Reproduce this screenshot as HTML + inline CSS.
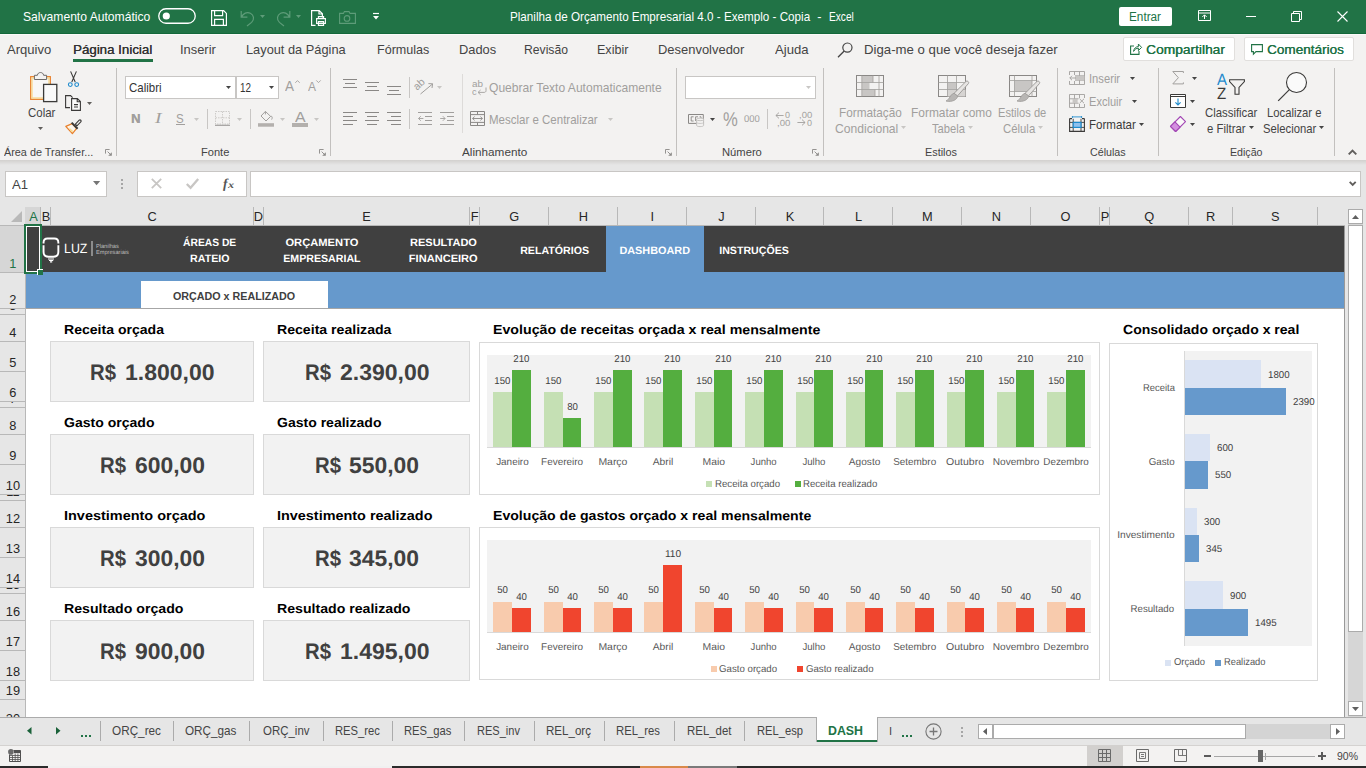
<!DOCTYPE html>
<html><head><meta charset="utf-8"><title>Excel</title>
<style>
html,body{margin:0;padding:0;}
body{width:1366px;height:768px;overflow:hidden;position:relative;background:#fff;font-family:"Liberation Sans",sans-serif;}
body div,body span,body svg{position:absolute;}
span{display:block;}
svg{overflow:visible;}
</style></head><body>
<div style="left:0px;top:0px;width:1366px;height:34px;background:#217346;"></div>
<div style="left:0px;top:33px;width:1366px;height:1px;background:#14683b;"></div>
<div style="left:0px;top:34px;width:1366px;height:126px;background:#f3f2f1;"></div>
<div style="left:0px;top:34px;width:1366px;height:1px;background:#fbfaf9;"></div>
<div style="left:0px;top:160px;width:1366px;height:5px;background:linear-gradient(#d2d0ce,#e6e6e6);"></div>
<div style="left:0px;top:165px;width:1366px;height:42px;background:#e6e6e6;"></div>
<span style="left:23.40px;top:9.00px;font-size:12.7px;line-height:16px;color:#fff;white-space:pre;transform:scale(0.9548,1);transform-origin:left 12px;">Salvamento Automático</span>
<svg style="left:158px;top:8px;" width="38" height="16" viewBox="0 0 38 16"><rect x="0.75" y="0.75" width="36.5" height="14.5" rx="7.25" fill="none" stroke="#fff" stroke-width="1.3"/><circle cx="8.3" cy="8" r="3.6" fill="#fff"/></svg>
<svg style="left:211px;top:10px;" width="16" height="16" viewBox="0 0 16 16"><path d="M0.6 0.6H12.6L15.4 3.4V15.4H0.6Z M3.6 0.6V5.6H11.6V0.6 M3.6 15.4V9.4H12.4V15.4" fill="none" stroke="#fff" stroke-width="1.2"/></svg>
<svg style="left:240px;top:10px;" width="16" height="16" viewBox="0 0 16 16"><path d="M1.2 1V7.2H7.4 M1.6 7C3 3.2 7 1.6 10.4 3.2C14 5 14.6 9.6 11.6 12.4L7 16" fill="none" stroke="#5e9c79" stroke-width="1.2"/></svg>
<svg style="left:260px;top:15px;" width="5" height="3" viewBox="0 0 5 3"><path d="M0 0H5L2.5 3Z" fill="#5e9c79"/></svg>
<svg style="left:275px;top:10px;" width="16" height="16" viewBox="0 0 16 16"><path d="M14.8 1V7.2H8.6 M14.4 7C13 3.2 9 1.6 5.6 3.2C2 5 1.4 9.6 4.4 12.4L9 16" fill="none" stroke="#5e9c79" stroke-width="1.2"/></svg>
<svg style="left:295.5px;top:15px;" width="5" height="3" viewBox="0 0 5 3"><path d="M0 0H5L2.5 3Z" fill="#5e9c79"/></svg>
<svg style="left:311px;top:10px;" width="16" height="16" viewBox="0 0 16 16"><path d="M4.5 15.4H0.6V0.6H8.2L11.4 3.8V7.5 M8 0.8V4H11.2" fill="none" stroke="#fff" stroke-width="1.2"/><path d="M5.6 8.6H14.4V13.4H5.6Z M7.4 8.4V6.6H12.6V8.4 M7.4 11.6H12.6V15.4H7.4Z" fill="none" stroke="#fff" stroke-width="1.1"/></svg>
<svg style="left:339px;top:11px;" width="17" height="13" viewBox="0 0 17 13"><path d="M0.6 2.4H4.4L5.4 0.6H10L11 2.4H16.4V12.4H0.6Z" fill="none" stroke="#5e9c79" stroke-width="1.1"/><circle cx="8" cy="7.4" r="2.8" fill="none" stroke="#5e9c79" stroke-width="1.1"/></svg>
<svg style="left:373px;top:13px;" width="6" height="7" viewBox="0 0 6 7"><path d="M0 0.5H6" stroke="#fff" stroke-width="1.2"/><path d="M0 3H6L3 6.4Z" fill="#fff"/></svg>
<span style="left:510.40px;top:9.00px;font-size:12.7px;line-height:16px;color:#fff;white-space:pre;transform:scale(0.9192,1);transform-origin:left 12px;">Planilha de Orçamento Empresarial 4.0 - Exemplo - Copia</span>
<span style="left:817.30px;top:9.00px;font-size:12.7px;line-height:16px;color:#fff;white-space:pre;">-</span>
<span style="left:828.80px;top:9.00px;font-size:12.7px;line-height:16px;color:#fff;white-space:pre;transform:scale(0.7986,1);transform-origin:left 12px;">Excel</span>
<div style="left:1119px;top:7px;width:53px;height:19px;background:#fff;border-radius:2px;"></div>
<span style="left:1128.48px;top:9.00px;font-size:12.5px;line-height:16px;color:#217346;white-space:pre;transform:scale(0.9401,1);transform-origin:center 12px;">Entrar</span>
<svg style="left:1198px;top:10px;" width="13" height="11" viewBox="0 0 13 11"><path d="M0.5 0.5H12.5V10.5H0.5Z M0.5 3H12.5 M6.5 9V5 M4.3 7L6.5 4.8L8.7 7" fill="none" stroke="#fff" stroke-width="1"/></svg>
<div style="left:1246px;top:16px;width:10px;height:1px;background:#fff;"></div>
<svg style="left:1291px;top:11px;" width="11" height="11" viewBox="0 0 11 11"><path d="M0.5 2.5H8.5V10.5H0.5Z M2.5 2.5V0.5H10.5V8.5H8.5" fill="none" stroke="#fff" stroke-width="1"/></svg>
<svg style="left:1337px;top:11px;" width="11" height="11" viewBox="0 0 11 11"><path d="M0.5 0.5L10.5 10.5 M10.5 0.5L0.5 10.5" fill="none" stroke="#fff" stroke-width="1.1"/></svg>
<span style="left:7.30px;top:41.00px;font-size:12.8px;line-height:17px;color:#444444;white-space:pre;transform:scale(1.0184,1);transform-origin:left 13px;">Arquivo</span>
<span style="left:180.00px;top:41.00px;font-size:12.8px;line-height:17px;color:#444444;white-space:pre;transform:scale(1.0067,1);transform-origin:left 13px;">Inserir</span>
<span style="left:246.00px;top:41.00px;font-size:12.8px;line-height:17px;color:#444444;white-space:pre;">Layout da Página</span>
<span style="left:377.00px;top:41.00px;font-size:12.8px;line-height:17px;color:#444444;white-space:pre;transform:scale(0.9804,1);transform-origin:left 13px;">Fórmulas</span>
<span style="left:459.40px;top:41.00px;font-size:12.8px;line-height:17px;color:#444444;white-space:pre;transform:scale(1.0054,1);transform-origin:left 13px;">Dados</span>
<span style="left:524.40px;top:41.00px;font-size:12.8px;line-height:17px;color:#444444;white-space:pre;transform:scale(0.9515,1);transform-origin:left 13px;">Revisão</span>
<span style="left:597.00px;top:41.00px;font-size:12.8px;line-height:17px;color:#444444;white-space:pre;transform:scale(0.9810,1);transform-origin:left 13px;">Exibir</span>
<span style="left:658.30px;top:41.00px;font-size:12.8px;line-height:17px;color:#444444;white-space:pre;transform:scale(1.0119,1);transform-origin:left 13px;">Desenvolvedor</span>
<span style="left:775.00px;top:41.00px;font-size:12.8px;line-height:17px;color:#444444;white-space:pre;transform:scale(1.0233,1);transform-origin:left 13px;">Ajuda</span>
<span style="left:73.20px;top:41.00px;font-size:12.8px;line-height:17px;color:#333;white-space:pre;transform:scale(1.0389,1);transform-origin:left 13px;text-shadow:0.25px 0 0 #333;">Página Inicial</span>
<div style="left:73px;top:59px;width:80px;height:3px;background:#217346;"></div>
<svg style="left:837px;top:42px;" width="17" height="16" viewBox="0 0 17 16"><circle cx="10.4" cy="5.6" r="4.6" fill="none" stroke="#444" stroke-width="1.2"/><path d="M7.2 9L1 15.2" stroke="#444" stroke-width="1.3"/></svg>
<span style="left:864.00px;top:41.00px;font-size:12.8px;line-height:17px;color:#444444;white-space:pre;transform:scale(1.0317,1);transform-origin:left 13px;">Diga-me o que você deseja fazer</span>
<div style="left:1122.5px;top:37px;width:112px;height:24px;background:#fff;border:1px solid #e1dfdd;box-sizing:border-box;border-radius:2px;"></div>
<svg style="left:1129.5px;top:43px;" width="12" height="12" viewBox="0 0 12 12"><path d="M4 3H0.6V11.4H9V8" fill="none" stroke="#217346" stroke-width="1.1"/><path d="M3.6 8.4C4 5.2 6 3.6 8.4 3.6V1L11.6 4.4L8.4 7.6V5.2C6.4 5.2 4.8 6.2 3.6 8.4Z" fill="none" stroke="#217346" stroke-width="1"/></svg>
<span style="left:1146.00px;top:41.00px;font-size:12.8px;line-height:17px;color:#217346;white-space:pre;transform:scale(1.0755,1);transform-origin:left 13px;text-shadow:0.3px 0 0 #217346;">Compartilhar</span>
<div style="left:1243.5px;top:37px;width:110px;height:24px;background:#fff;border:1px solid #e1dfdd;box-sizing:border-box;border-radius:2px;"></div>
<svg style="left:1251px;top:44px;" width="12" height="11" viewBox="0 0 12 11"><path d="M0.6 0.6H11.4V7.6H5L2.4 10.2V7.6H0.6Z" fill="none" stroke="#217346" stroke-width="1.1"/></svg>
<span style="left:1267.00px;top:41.00px;font-size:12.8px;line-height:17px;color:#217346;white-space:pre;transform:scale(1.0570,1);transform-origin:left 13px;text-shadow:0.3px 0 0 #217346;">Comentários</span>
<svg style="left:29px;top:71px;" width="30" height="32" viewBox="0 0 30 32"><rect x="1.7" y="5.7" width="19.6" height="22.6" fill="#f8f7f6" stroke="#e8812d" stroke-width="1.3"/>
<rect x="3" y="7" width="17" height="20" fill="none" stroke="#f8d98f" stroke-width="1.3"/>
<path d="M5.4 8.5V4.3H8.4C8.6 0.6 14.4 0.6 14.6 4.3H17.6V8.5Z" fill="#f3f2f1" stroke="#6d6b69" stroke-width="1"/>
<rect x="14.6" y="13.4" width="13.2" height="17.2" fill="#fafafa" stroke="#3b3a39" stroke-width="1.3"/></svg>
<span style="left:27.60px;top:104.00px;font-size:12.8px;line-height:17px;color:#444444;white-space:pre;transform:scale(0.8958,1);transform-origin:left 13px;">Colar</span>
<svg style="left:37.8px;top:127px;" width="5" height="3" viewBox="0 0 5 3"><path d="M0 0H5L2.5 3Z" fill="#605e5c"/></svg>
<svg style="left:67.5px;top:71px;" width="11" height="16.5" viewBox="0 0 11 16.5"><path d="M2.6 0.4L7.2 11 M8.4 0.4L3.8 11" stroke="#3b3a39" stroke-width="1.1" fill="none"/>
<circle cx="2.3" cy="13.6" r="1.9" fill="none" stroke="#1e8bcd" stroke-width="1.1"/><circle cx="8.7" cy="13.6" r="1.9" fill="none" stroke="#1e8bcd" stroke-width="1.1"/></svg>
<svg style="left:65px;top:95px;" width="17" height="16" viewBox="0 0 17 16"><path d="M5 12.6H0.6V0.6H5.6L7.6 2.6" fill="none" stroke="#3b3a39" stroke-width="1.1"/>
<path d="M6.6 3.6H12.4L15.4 6.6V15.4H6.6Z M12.2 3.8V6.8H15.2 M9 9.6H13 M9 12H13" fill="#fafafa" stroke="#3b3a39" stroke-width="1.1"/></svg>
<svg style="left:86.8px;top:101.8px;" width="5" height="3" viewBox="0 0 5 3"><path d="M0 0H5L2.5 3Z" fill="#605e5c"/></svg>
<svg style="left:65px;top:118px;" width="18" height="17" viewBox="0 0 18 17"><path d="M7.2 5.6L11.6 10.4L7.4 15.6L0.8 8.4Z" fill="#fdf6ec" stroke="#e8812d" stroke-width="1.3" stroke-linejoin="round"/>
<path d="M8.6 13.6L4 9.2L6 14Z" fill="#f8d98f"/>
<path d="M6.6 4.6L12.6 10.8" stroke="#3b3a39" stroke-width="2"/>
<path d="M10.4 6.2L14.2 2.2C15.2 1.2 16.8 2.8 15.8 3.8L12 7.8Z" fill="#f3f2f1" stroke="#3b3a39" stroke-width="1.1"/></svg>
<span style="left:4.40px;top:144.00px;font-size:11.7px;line-height:15px;color:#444444;white-space:pre;transform:scale(0.9278,1);transform-origin:left 12px;">Área de Transfer...</span>
<svg style="left:105px;top:149px;" width="7" height="7" viewBox="0 0 7 7"><path d="M0.5 4.6V0.5H4.6 M2.6 2.6L5.6 5.6" fill="none" stroke="#8a8886" stroke-width="0.9"/><path d="M6.8 3.2V6.8H3.2Z" fill="#8a8886"/></svg>
<div style="left:116px;top:68px;width:1px;height:88px;background:#c2c0be;"></div>
<div style="left:125px;top:76px;width:111px;height:23px;background:#fff;border:1px solid #c8c6c4;box-sizing:border-box;"></div>
<div style="left:236px;top:76px;width:43px;height:23px;background:#fff;border:1px solid #c8c6c4;box-sizing:border-box;"></div>
<span style="left:128.80px;top:79.00px;font-size:12.8px;line-height:17px;color:#333;white-space:pre;transform:scale(0.8959,1);transform-origin:left 13px;">Calibri</span>
<svg style="left:226px;top:86px;" width="5" height="3" viewBox="0 0 5 3"><path d="M0 0H5L2.5 3Z" fill="#444"/></svg>
<span style="left:240.00px;top:79.00px;font-size:12.8px;line-height:17px;color:#333;white-space:pre;transform:scale(0.7726,1);transform-origin:left 13px;">12</span>
<svg style="left:269px;top:86px;" width="5" height="3" viewBox="0 0 5 3"><path d="M0 0H5L2.5 3Z" fill="#444"/></svg>
<span style="left:285.40px;top:76.00px;font-size:15px;line-height:19px;color:#a19f9d;white-space:pre;transform:scale(0.8996,1);transform-origin:left 15px;">A</span>
<svg style="left:294.5px;top:79.5px;" width="5" height="3" viewBox="0 0 5 3"><path d="M0.3 2.8L2.5 0.6L4.7 2.8" fill="none" stroke="#a19f9d" stroke-width="0.9"/></svg>
<span style="left:307.50px;top:78.00px;font-size:13px;line-height:17px;color:#a19f9d;white-space:pre;transform:scale(0.9226,1);transform-origin:left 13px;">A</span>
<svg style="left:315.5px;top:79.5px;" width="5" height="3" viewBox="0 0 5 3"><path d="M0.3 0.4L2.5 2.6L4.7 0.4" fill="none" stroke="#a19f9d" stroke-width="0.9"/></svg>
<span style="left:131.00px;top:110.00px;font-size:12.8px;line-height:17px;color:#a19f9d;white-space:pre;font-weight:bold;transform:scale(1.0169,1);transform-origin:left 13px;text-shadow:0.3px 0 0 #a19f9d;">N</span>
<span style="left:154.50px;top:109.00px;font-size:14.5px;line-height:18px;color:#a19f9d;white-space:pre;font-family:'Liberation Serif',serif;font-style:italic;transform:scale(1.3461,1);transform-origin:left 14px;">I</span>
<span style="left:176.30px;top:110.00px;font-size:12.8px;line-height:17px;color:#a19f9d;white-space:pre;transform:scale(0.9019,1);transform-origin:left 13px;">S</span>
<div style="left:176px;top:124px;width:8.5px;height:1px;background:#a19f9d;"></div>
<svg style="left:193.8px;top:118px;" width="5" height="3" viewBox="0 0 5 3"><path d="M0 0H5L2.5 3Z" fill="#c8c6c4"/></svg>
<div style="left:207px;top:109px;width:1px;height:20px;background:#c8c6c4;"></div>
<svg style="left:215px;top:111px;" width="15" height="15" viewBox="0 0 15 15"><path d="M0.5 0.5H14.5V13H0.5Z M7.5 0.5V13 M0.5 6.8H14.5" fill="none" stroke="#c8c6c4" stroke-width="0.9" stroke-dasharray="1.5 1"/><path d="M0 14.3H15" stroke="#a19f9d" stroke-width="1.2"/></svg>
<svg style="left:236.8px;top:118px;" width="5" height="3" viewBox="0 0 5 3"><path d="M0 0H5L2.5 3Z" fill="#c8c6c4"/></svg>
<div style="left:250px;top:109px;width:1px;height:20px;background:#c8c6c4;"></div>
<svg style="left:258px;top:110px;" width="16" height="17" viewBox="0 0 16 17"><path d="M7.4 1.4L3 6L8 11L12.6 6.4Z M7.4 1.4V4.4 M12.4 6.4C14.4 5.6 14.6 8 13.6 9.6" fill="none" stroke="#a19f9d" stroke-width="1"/><rect x="0" y="13.2" width="16" height="3.5" fill="#b3b0ad"/></svg>
<svg style="left:279.9px;top:118px;" width="5" height="3" viewBox="0 0 5 3"><path d="M0 0H5L2.5 3Z" fill="#c8c6c4"/></svg>
<span style="left:295.00px;top:108.00px;font-size:14.5px;line-height:18px;color:#a19f9d;white-space:pre;transform:scale(1.0960,1);transform-origin:left 14px;">A</span>
<div style="left:292px;top:123.2px;width:16px;height:3.5px;background:#b3b0ad;"></div>
<svg style="left:314px;top:118px;" width="5" height="3" viewBox="0 0 5 3"><path d="M0 0H5L2.5 3Z" fill="#c8c6c4"/></svg>
<span style="left:200.90px;top:144.00px;font-size:11.7px;line-height:15px;color:#444444;white-space:pre;transform:scale(0.9492,1);transform-origin:left 12px;">Fonte</span>
<svg style="left:319px;top:149px;" width="7" height="7" viewBox="0 0 7 7"><path d="M0.5 4.6V0.5H4.6 M2.6 2.6L5.6 5.6" fill="none" stroke="#8a8886" stroke-width="0.9"/><path d="M6.8 3.2V6.8H3.2Z" fill="#8a8886"/></svg>
<div style="left:330px;top:68px;width:1px;height:88px;background:#c2c0be;"></div>
<div style="left:343px;top:79px;width:14px;height:1px;background:#8a8886;"></div>
<div style="left:345px;top:83px;width:10px;height:1px;background:#8a8886;"></div>
<div style="left:343px;top:87px;width:14px;height:1px;background:#8a8886;"></div>
<div style="left:365px;top:82px;width:14px;height:1px;background:#8a8886;"></div>
<div style="left:367px;top:86px;width:10px;height:1px;background:#8a8886;"></div>
<div style="left:365px;top:90px;width:14px;height:1px;background:#8a8886;"></div>
<div style="left:387px;top:86px;width:14px;height:1px;background:#8a8886;"></div>
<div style="left:389px;top:90px;width:10px;height:1px;background:#8a8886;"></div>
<div style="left:387px;top:94px;width:14px;height:1px;background:#8a8886;"></div>
<div style="left:409px;top:77px;width:1px;height:21px;background:#c8c6c4;"></div>
<svg style="left:416.5px;top:79px;" width="17" height="16" viewBox="0 0 17 16"><path d="M3.5 15L15.5 5 M11.4 4.6L15.6 4.8L15 9" fill="none" stroke="#a19f9d" stroke-width="1"/></svg>
<span style="left:418.50px;top:79.00px;font-size:10.5px;line-height:14px;color:#a19f9d;white-space:pre;transform:rotate(-42deg);transform-origin:left bottom;">ab</span>
<svg style="left:437px;top:85.5px;" width="5" height="3" viewBox="0 0 5 3"><path d="M0 0H5L2.5 3Z" fill="#c8c6c4"/></svg>
<div style="left:343px;top:112px;width:14px;height:1px;background:#8a8886;"></div>
<div style="left:343px;top:116px;width:10px;height:1px;background:#8a8886;"></div>
<div style="left:343px;top:120px;width:14px;height:1px;background:#8a8886;"></div>
<div style="left:343px;top:124px;width:10px;height:1px;background:#8a8886;"></div>
<div style="left:365px;top:112px;width:14px;height:1px;background:#8a8886;"></div>
<div style="left:367px;top:116px;width:10px;height:1px;background:#8a8886;"></div>
<div style="left:365px;top:120px;width:14px;height:1px;background:#8a8886;"></div>
<div style="left:367px;top:124px;width:10px;height:1px;background:#8a8886;"></div>
<div style="left:387px;top:112px;width:14px;height:1px;background:#8a8886;"></div>
<div style="left:391px;top:116px;width:10px;height:1px;background:#8a8886;"></div>
<div style="left:387px;top:120px;width:14px;height:1px;background:#8a8886;"></div>
<div style="left:391px;top:124px;width:10px;height:1px;background:#8a8886;"></div>
<div style="left:409px;top:109px;width:1px;height:20px;background:#c8c6c4;"></div>
<svg style="left:418px;top:112px;" width="14" height="13" viewBox="0 0 14 13"><path d="M0 0.5H14 M0 12.5H14 M7 4.5H14 M7 8.5H14" stroke="#a19f9d" stroke-width="1"/><path d="M5.4 6.5H0.6 M2.8 4.2L0.5 6.5L2.8 8.8" fill="none" stroke="#a19f9d" stroke-width="0.9"/></svg>
<svg style="left:440px;top:112px;" width="14" height="13" viewBox="0 0 14 13"><path d="M0 0.5H14 M0 12.5H14 M7 4.5H14 M7 8.5H14" stroke="#a19f9d" stroke-width="1"/><path d="M0.2 6.5H5 M2.8 4.2L5.1 6.5L2.8 8.8" fill="none" stroke="#a19f9d" stroke-width="0.9"/></svg>
<div style="left:462px;top:74px;width:1px;height:59px;background:#dddbd9;"></div>
<span style="left:472.00px;top:77.00px;font-size:9.5px;line-height:13px;color:#a19f9d;white-space:pre;transform:scale(1.0410,1);transform-origin:left 10px;">ab</span>
<span style="left:472.00px;top:85.00px;font-size:9.5px;line-height:13px;color:#a19f9d;white-space:pre;transform:scale(0.9684,1);transform-origin:left 10px;">c</span>
<svg style="left:477px;top:87px;" width="10" height="8" viewBox="0 0 10 8"><path d="M9 0.5V3.6C9 5 8 5.4 7 5.4H1.4 M3.6 3L1 5.4L3.6 7.8" fill="none" stroke="#a19f9d" stroke-width="0.9"/></svg>
<span style="left:489.30px;top:79.00px;font-size:12.8px;line-height:17px;color:#a19f9d;white-space:pre;transform:scale(0.9420,1);transform-origin:left 13px;">Quebrar Texto Automaticamente</span>
<svg style="left:470px;top:111px;" width="15" height="15" viewBox="0 0 15 15"><path d="M0.5 0.5H14.5V14.5H0.5Z M0.5 3.6H14.5 M0.5 11.4H14.5 M7.5 0.5V3.6 M7.5 11.4V14.5" fill="none" stroke="#8a8886" stroke-width="1"/><path d="M2.6 7.5H12.4 M4.6 5.6L2.6 7.5L4.6 9.4 M10.4 5.6L12.4 7.5L10.4 9.4" fill="none" stroke="#8a8886" stroke-width="0.9"/></svg>
<span style="left:489.30px;top:111.00px;font-size:12.8px;line-height:17px;color:#a19f9d;white-space:pre;transform:scale(0.8989,1);transform-origin:left 13px;">Mesclar e Centralizar</span>
<svg style="left:607.8px;top:118px;" width="5" height="3" viewBox="0 0 5 3"><path d="M0 0H5L2.5 3Z" fill="#c8c6c4"/></svg>
<span style="left:462.00px;top:144.00px;font-size:11.7px;line-height:15px;color:#444444;white-space:pre;transform:scale(1.0040,1);transform-origin:left 12px;">Alinhamento</span>
<svg style="left:665px;top:149px;" width="7" height="7" viewBox="0 0 7 7"><path d="M0.5 4.6V0.5H4.6 M2.6 2.6L5.6 5.6" fill="none" stroke="#8a8886" stroke-width="0.9"/><path d="M6.8 3.2V6.8H3.2Z" fill="#8a8886"/></svg>
<div style="left:676px;top:68px;width:1px;height:88px;background:#c2c0be;"></div>
<div style="left:685px;top:76px;width:131px;height:23px;background:#fff;border:1px solid #c8c6c4;box-sizing:border-box;"></div>
<svg style="left:806px;top:86px;" width="5" height="3" viewBox="0 0 5 3"><path d="M0 0H5L2.5 3Z" fill="#c8c6c4"/></svg>
<svg style="left:688px;top:114px;" width="17" height="13" viewBox="0 0 17 13"><path d="M0.5 0.5H15.3V9.4H0.5Z" fill="none" stroke="#8a8886" stroke-width="1"/><path d="M5.6 2.8H3.2V7H5.6 M7.6 7V2.8H10 M11.6 2.8H13V4" fill="none" stroke="#8a8886" stroke-width="0.9"/><path d="M8.6 5.4H15.6V11.4C15.6 13 8.6 13 8.6 11.4Z" fill="#f3f2f1" stroke="#c0bebc" stroke-width="0.9"/><ellipse cx="12.1" cy="5.4" rx="3.5" ry="1.3" fill="#f3f2f1" stroke="#c0bebc" stroke-width="0.9"/><path d="M8.6 8.4C8.6 9.8 15.6 9.8 15.6 8.4" fill="none" stroke="#c0bebc" stroke-width="0.8"/></svg>
<svg style="left:710px;top:118px;" width="5" height="3" viewBox="0 0 5 3"><path d="M0 0H5L2.5 3Z" fill="#444"/></svg>
<span style="left:722.70px;top:107.00px;font-size:20px;line-height:24px;color:#a19f9d;white-space:pre;transform:rotate(0.03deg) scale(0.8322,1);transform-origin:left 19px;">%</span>
<span style="left:744.00px;top:112.00px;font-size:9.8px;line-height:13px;color:#a19f9d;white-space:pre;transform:rotate(0.03deg) scale(0.9663,1);transform-origin:left 10px;">000</span>
<div style="left:767px;top:109px;width:1px;height:20px;background:#c8c6c4;"></div>
<svg style="left:775px;top:112px;" width="9" height="7" viewBox="0 0 9 7"><path d="M8.6 3.5H0.9 M4 0.6L0.9 3.5L4 6.4" fill="none" stroke="#a19f9d" stroke-width="0.9"/></svg>
<span style="left:785.00px;top:109.00px;font-size:8.8px;line-height:12px;color:#a19f9d;white-space:pre;transform:rotate(0.03deg) scale(1.0216,1);transform-origin:left 9px;">0</span>
<span style="left:776.60px;top:117.00px;font-size:8.8px;line-height:12px;color:#a19f9d;white-space:pre;transform:rotate(0.03deg) scale(1.0954,1);transform-origin:left 9px;">,00</span>
<span style="left:799.00px;top:109.00px;font-size:8.8px;line-height:12px;color:#a19f9d;white-space:pre;transform:rotate(0.03deg) scale(1.0790,1);transform-origin:left 9px;">,00</span>
<span style="left:806.80px;top:117.00px;font-size:8.8px;line-height:12px;color:#a19f9d;white-space:pre;transform:rotate(0.03deg) scale(1.0216,1);transform-origin:left 9px;">0</span>
<svg style="left:797px;top:118.6px;" width="9" height="7" viewBox="0 0 9 7"><path d="M0.4 3.5H8.1 M5 0.6L8.1 3.5L5 6.4" fill="none" stroke="#a19f9d" stroke-width="0.9"/></svg>
<span style="left:721.50px;top:144.00px;font-size:11.7px;line-height:15px;color:#444444;white-space:pre;transform:scale(0.9588,1);transform-origin:left 12px;">Número</span>
<svg style="left:812.4px;top:149px;" width="7" height="7" viewBox="0 0 7 7"><path d="M0.5 4.6V0.5H4.6 M2.6 2.6L5.6 5.6" fill="none" stroke="#8a8886" stroke-width="0.9"/><path d="M6.8 3.2V6.8H3.2Z" fill="#8a8886"/></svg>
<div style="left:823px;top:68px;width:1px;height:88px;background:#c2c0be;"></div>
<svg style="left:856px;top:75px;" width="28" height="22" viewBox="0 0 28 22"><rect x="0.5" y="0.5" width="27" height="21" fill="#f3f2f1" stroke="#8a8886"/>
<rect x="6" y="1" width="11" height="6.5" fill="#c8c6c4"/><rect x="6" y="7.5" width="7.5" height="7" fill="#c8c6c4"/><rect x="6" y="14.5" width="13" height="6.5" fill="#c8c6c4"/>
<path d="M0.5 7.5H27.5 M0.5 14.5H27.5 M5.8 0.5V21.5 M23 0.5V21.5 M17 0.5V7.5 M19 14.5V21.5" fill="none" stroke="#a19f9d" stroke-width="0.8"/></svg>
<span style="left:839.20px;top:104.00px;font-size:12.8px;line-height:17px;color:#a19f9d;white-space:pre;transform:scale(0.9196,1);transform-origin:left 13px;">Formatação</span>
<span style="left:834.70px;top:120.00px;font-size:12.8px;line-height:17px;color:#a19f9d;white-space:pre;transform:scale(0.9464,1);transform-origin:left 13px;">Condicional</span>
<svg style="left:900.9px;top:125.5px;" width="5" height="3" viewBox="0 0 5 3"><path d="M0 0H5L2.5 3Z" fill="#c8c6c4"/></svg>
<svg style="left:938px;top:75px;" width="31" height="28" viewBox="0 0 31 28"><rect x="0.5" y="0.5" width="27" height="21" fill="#f3f2f1" stroke="#8a8886"/>
<rect x="9.5" y="7.5" width="9" height="7" fill="#c8c6c4"/><rect x="9.5" y="14.5" width="18" height="7" fill="#d6d4d2"/>
<path d="M0.5 7.5H27.5 M0.5 14.5H27.5 M9.5 0.5V21.5 M18.5 0.5V21.5" fill="none" stroke="#a19f9d" stroke-width="0.8"/>
<path d="M27.8 6.6C29.2 5.2 31.6 7 30.4 8.6L19.4 21L16 18.4Z" fill="#e6e4e2" stroke="#a19f9d" stroke-width="1"/>
<path d="M16 18.2L19.6 21C19.4 24.8 13.8 27.4 8 26C12 24.8 11.6 19.4 16 18.2Z" fill="#b8b6b4" stroke="#a19f9d" stroke-width="0.9"/></svg>
<span style="left:911.40px;top:104.00px;font-size:12.8px;line-height:17px;color:#a19f9d;white-space:pre;transform:scale(0.9323,1);transform-origin:left 13px;">Formatar como</span>
<span style="left:932.00px;top:120.00px;font-size:12.8px;line-height:17px;color:#a19f9d;white-space:pre;transform:scale(0.8749,1);transform-origin:left 13px;">Tabela</span>
<svg style="left:968px;top:125.5px;" width="5" height="3" viewBox="0 0 5 3"><path d="M0 0H5L2.5 3Z" fill="#c8c6c4"/></svg>
<svg style="left:1009px;top:75px;" width="31" height="28" viewBox="0 0 31 28"><rect x="0.5" y="0.5" width="27" height="21" fill="#f3f2f1" stroke="#8a8886"/>
<rect x="5.5" y="5.5" width="17.5" height="11" fill="#c8c6c4"/>
<path d="M0.5 5.5H27.5 M0.5 16.5H27.5 M5.5 0.5V21.5 M23 0.5V21.5" fill="none" stroke="#a19f9d" stroke-width="0.8"/>
<path d="M27.8 6.6C29.2 5.2 31.6 7 30.4 8.6L19.4 21L16 18.4Z" fill="#e6e4e2" stroke="#a19f9d" stroke-width="1"/>
<path d="M16 18.2L19.6 21C19.4 24.8 13.8 27.4 8 26C12 24.8 11.6 19.4 16 18.2Z" fill="#b8b6b4" stroke="#a19f9d" stroke-width="0.9"/></svg>
<span style="left:998.40px;top:104.00px;font-size:12.8px;line-height:17px;color:#a19f9d;white-space:pre;transform:scale(0.8704,1);transform-origin:left 13px;">Estilos de</span>
<span style="left:1002.80px;top:120.00px;font-size:12.8px;line-height:17px;color:#a19f9d;white-space:pre;transform:scale(0.8874,1);transform-origin:left 13px;">Célula</span>
<svg style="left:1038.3px;top:125.5px;" width="5" height="3" viewBox="0 0 5 3"><path d="M0 0H5L2.5 3Z" fill="#c8c6c4"/></svg>
<span style="left:924.60px;top:144.00px;font-size:11.7px;line-height:15px;color:#444444;white-space:pre;transform:scale(0.9286,1);transform-origin:left 12px;">Estilos</span>
<div style="left:1057px;top:68px;width:1px;height:88px;background:#c2c0be;"></div>
<svg style="left:1069px;top:71px;" width="16" height="14" viewBox="0 0 16 14"><path d="M0.5 0.5H15.5V13.5H0.5Z M0.5 4.8H15.5 M0.5 9.2H15.5 M5.5 0.5V13.5 M10.5 0.5V13.5" fill="none" stroke="#a19f9d" stroke-width="0.9"/>
<rect x="5.6" y="4.8" width="9.8" height="4.4" fill="#c8c6c4"/><rect x="0" y="4" width="6" height="6" fill="#f3f2f1"/>
<path d="M7 7H0.8 M3 4.8L0.8 7L3 9.2" fill="none" stroke="#a19f9d" stroke-width="0.9"/></svg>
<span style="left:1088.60px;top:70.00px;font-size:12.8px;line-height:17px;color:#a19f9d;white-space:pre;transform:scale(0.8745,1);transform-origin:left 13px;">Inserir</span>
<svg style="left:1130px;top:77px;" width="5" height="3" viewBox="0 0 5 3"><path d="M0 0H5L2.5 3Z" fill="#444"/></svg>
<svg style="left:1069px;top:94px;" width="16" height="14" viewBox="0 0 16 14"><path d="M0.5 0.5H15.5V13.5H0.5Z M0.5 4.8H15.5 M0.5 9.2H15.5 M5.5 0.5V13.5 M10.5 0.5V13.5" fill="none" stroke="#a19f9d" stroke-width="0.9"/>
<rect x="3.6" y="4.8" width="5" height="4.4" fill="#c8c6c4"/><rect x="9.6" y="4" width="6.4" height="6" fill="#f3f2f1"/>
<path d="M10.6 4.8L15 9.2 M15 4.8L10.6 9.2" fill="none" stroke="#a19f9d" stroke-width="0.9"/></svg>
<span style="left:1088.60px;top:93.00px;font-size:12.8px;line-height:17px;color:#a19f9d;white-space:pre;transform:scale(0.8644,1);transform-origin:left 13px;">Excluir</span>
<svg style="left:1131.8px;top:100px;" width="5" height="3" viewBox="0 0 5 3"><path d="M0 0H5L2.5 3Z" fill="#444"/></svg>
<svg style="left:1069px;top:116px;" width="16" height="16" viewBox="0 0 16 16"><path d="M0.6 2.6V15.4H15.4V2.6 M0.6 2.6H3 M13 2.6H15.4" fill="none" stroke="#3b3a39" stroke-width="1.1"/>
<path d="M4.2 2.8V15.4 M12 2.8V15.4 M0.6 6.4H15.4 M0.6 11.4H15.4" fill="none" stroke="#3b3a39" stroke-width="0.9"/>
<rect x="4.2" y="6.4" width="7.8" height="5" fill="#8fc1ee" stroke="#1e8bcd" stroke-width="1.2"/>
<path d="M3.4 0.9H12.6 M3.4 0V2 M12.6 0V2" stroke="#1e8bcd" stroke-width="0.9" fill="none"/></svg>
<span style="left:1088.60px;top:116.00px;font-size:12.8px;line-height:17px;color:#3b3a39;white-space:pre;transform:scale(0.9033,1);transform-origin:left 13px;">Formatar</span>
<svg style="left:1139.2px;top:123px;" width="5" height="3" viewBox="0 0 5 3"><path d="M0 0H5L2.5 3Z" fill="#444"/></svg>
<span style="left:1089.80px;top:144.00px;font-size:11.7px;line-height:15px;color:#444444;white-space:pre;transform:scale(0.9149,1);transform-origin:left 12px;">Células</span>
<div style="left:1158px;top:68px;width:1px;height:88px;background:#c2c0be;"></div>
<svg style="left:1172px;top:71.4px;" width="12" height="13.4" viewBox="0 0 12 13.4"><path d="M11.4 2V0.5H0.8L6.4 6.7L0.8 12.9H11.4V11.4" fill="none" stroke="#a19f9d" stroke-width="1"/></svg>
<svg style="left:1192px;top:76.5px;" width="5" height="3" viewBox="0 0 5 3"><path d="M0 0H5L2.5 3Z" fill="#444"/></svg>
<svg style="left:1170px;top:94px;" width="16" height="14" viewBox="0 0 16 14"><path d="M0.5 0.5H15.5V13.5H0.5Z M0.5 2.5H15.5" fill="#fff" stroke="#3b3a39" stroke-width="1"/><path d="M8 4.4V11 M5.4 8.4L8 11L10.6 8.4" fill="none" stroke="#1e8bcd" stroke-width="1.1"/></svg>
<svg style="left:1189.9px;top:99.8px;" width="5" height="3" viewBox="0 0 5 3"><path d="M0 0H5L2.5 3Z" fill="#444"/></svg>
<svg style="left:1170px;top:116px;" width="16" height="16" viewBox="0 0 16 16"><path d="M10.4 0.5L15.5 5.6L5.6 15.5L0.5 10.4Z" fill="#faf9f8" stroke="#a246b4" stroke-width="1.1" stroke-linejoin="round"/><path d="M4.95 5.95L10.05 11.05L5.6 15.5L0.5 10.4Z" fill="#d38fdf" stroke="#a246b4" stroke-width="1.1" stroke-linejoin="round"/></svg>
<svg style="left:1189.9px;top:123.1px;" width="5" height="3" viewBox="0 0 5 3"><path d="M0 0H5L2.5 3Z" fill="#444"/></svg>
<span style="left:1217.00px;top:69.00px;font-size:16.2px;line-height:20px;color:#1e8bcd;white-space:pre;transform:rotate(0.03deg) scale(0.9255,1);transform-origin:left 16px;">A</span>
<span style="left:1217.20px;top:83.00px;font-size:16.2px;line-height:20px;color:#3b3a39;white-space:pre;transform:rotate(0.03deg) scale(0.9297,1);transform-origin:left 16px;">Z</span>
<svg style="left:1229px;top:79px;" width="16" height="16" viewBox="0 0 16 16"><path d="M0.6 0.8H15.4V2.6L10 8.4V15.2H6V8.4L0.6 2.6Z" fill="none" stroke="#3b3a39" stroke-width="1.1"/></svg>
<span style="left:1204.60px;top:104.00px;font-size:12.8px;line-height:17px;color:#444444;white-space:pre;transform:scale(0.8877,1);transform-origin:left 13px;">Classificar</span>
<span style="left:1207.40px;top:120.00px;font-size:12.8px;line-height:17px;color:#444444;white-space:pre;transform:scale(0.8898,1);transform-origin:left 13px;">e Filtrar</span>
<svg style="left:1249.4px;top:125.5px;" width="5" height="3" viewBox="0 0 5 3"><path d="M0 0H5L2.5 3Z" fill="#444"/></svg>
<svg style="left:1277px;top:71px;" width="32" height="31" viewBox="0 0 32 31"><circle cx="19.5" cy="11.5" r="10" fill="#fafafa" stroke="#3b3a39" stroke-width="1.1"/><path d="M12.4 18.6L1.2 29.8" stroke="#3b3a39" stroke-width="1.2"/></svg>
<span style="left:1266.60px;top:104.00px;font-size:12.8px;line-height:17px;color:#444444;white-space:pre;transform:scale(0.8788,1);transform-origin:left 13px;">Localizar e</span>
<span style="left:1262.60px;top:120.00px;font-size:12.8px;line-height:17px;color:#444444;white-space:pre;transform:scale(0.8796,1);transform-origin:left 13px;">Selecionar</span>
<svg style="left:1319.3px;top:125.5px;" width="5" height="3" viewBox="0 0 5 3"><path d="M0 0H5L2.5 3Z" fill="#444"/></svg>
<span style="left:1229.70px;top:144.00px;font-size:11.7px;line-height:15px;color:#444444;white-space:pre;transform:scale(0.9085,1);transform-origin:left 12px;">Edição</span>
<div style="left:1334px;top:68px;width:1px;height:88px;background:#c2c0be;"></div>
<svg style="left:1347.5px;top:149px;" width="9" height="6" viewBox="0 0 9 6"><path d="M0.7 5.3L4.5 1.5L8.3 5.3" fill="none" stroke="#605e5c" stroke-width="1.9"/></svg>
<div style="left:5px;top:171px;width:102px;height:26px;background:#fff;border:1px solid #c8c6c4;box-sizing:border-box;"></div>
<span style="left:11.70px;top:176.00px;font-size:12.8px;line-height:17px;color:#444;white-space:pre;transform:scale(1.0283,1);transform-origin:left 13px;">A1</span>
<svg style="left:92.8px;top:180.8px;" width="7.2" height="4.2" viewBox="0 0 7.2 4.2"><path d="M0 0H7.2L3.6 4.2Z" fill="#767676"/></svg>
<div style="left:121px;top:179px;width:2px;height:2px;background:#a6a6a6;"></div>
<div style="left:121px;top:183px;width:2px;height:2px;background:#a6a6a6;"></div>
<div style="left:121px;top:187px;width:2px;height:2px;background:#a6a6a6;"></div>
<div style="left:137px;top:171px;width:110px;height:26px;background:#fff;border:1px solid #c8c6c4;box-sizing:border-box;"></div>
<svg style="left:150.5px;top:178px;" width="11" height="11" viewBox="0 0 11 11"><path d="M0.8 0.8L10.2 10.2 M10.2 0.8L0.8 10.2" stroke="#c8c6c4" stroke-width="1.8" fill="none"/></svg>
<svg style="left:186px;top:178px;" width="13" height="11" viewBox="0 0 13 11"><path d="M0.8 6L4.6 9.8L12.2 1" stroke="#c8c6c4" stroke-width="2.3" fill="none"/></svg>
<span style="left:222.60px;top:175.00px;font-size:13.5px;line-height:17px;color:#555;white-space:pre;font-family:'Liberation Serif',serif;font-weight:bold;font-style:italic;transform:rotate(0.03deg) scale(1.0000,1);transform-origin:left 13px;">f</span>
<span style="left:227.60px;top:178.00px;font-size:10px;line-height:13px;color:#555;white-space:pre;font-family:'Liberation Serif',serif;font-weight:bold;font-style:italic;transform:rotate(0.03deg) scale(1.2000,1);transform-origin:left 10px;">x</span>
<div style="left:250px;top:171px;width:1111px;height:26px;background:#fff;border:1px solid #c8c6c4;box-sizing:border-box;"></div>
<svg style="left:1349px;top:181px;" width="7.4" height="5" viewBox="0 0 7.4 5"><path d="M0.7 0.8L3.7 3.8L6.7 0.8" fill="none" stroke="#605e5c" stroke-width="1.9"/></svg>
<div style="left:0px;top:207px;width:1345px;height:19px;background:#e6e6e6;"></div>
<div style="left:0px;top:226px;width:25px;height:491px;background:#e6e6e6;"></div>
<div style="left:25px;top:207px;width:16px;height:17px;background:#d6d6d6;"></div>
<div style="left:0px;top:226px;width:25px;height:46px;background:#d6d6d6;"></div>
<svg style="left:11px;top:211px;" width="11" height="11" viewBox="0 0 11 11"><path d="M11 0V11H0Z" fill="#b9b9b9"/></svg>
<div style="left:40px;top:207px;width:1px;height:18px;background:#b8b8b8;"></div>
<span style="left:29.13px;top:208.00px;font-size:12.8px;line-height:17px;color:#217346;white-space:pre;">A</span>
<div style="left:50px;top:207px;width:1px;height:18px;background:#b8b8b8;"></div>
<span style="left:41.63px;top:208.00px;font-size:12.8px;line-height:17px;color:#262626;white-space:pre;">B</span>
<div style="left:253px;top:207px;width:1px;height:18px;background:#b8b8b8;"></div>
<span style="left:147.43px;top:208.00px;font-size:12.8px;line-height:17px;color:#262626;white-space:pre;">C</span>
<div style="left:263px;top:207px;width:1px;height:18px;background:#b8b8b8;"></div>
<span style="left:253.68px;top:208.00px;font-size:12.8px;line-height:17px;color:#262626;white-space:pre;">D</span>
<div style="left:469px;top:207px;width:1px;height:18px;background:#b8b8b8;"></div>
<span style="left:362.23px;top:208.00px;font-size:12.8px;line-height:17px;color:#262626;white-space:pre;">E</span>
<div style="left:479px;top:207px;width:1px;height:18px;background:#b8b8b8;"></div>
<span style="left:470.84px;top:208.00px;font-size:12.8px;line-height:17px;color:#262626;white-space:pre;">F</span>
<div style="left:548px;top:207px;width:1px;height:18px;background:#b8b8b8;"></div>
<span style="left:509.37px;top:208.00px;font-size:12.8px;line-height:17px;color:#262626;white-space:pre;">G</span>
<div style="left:617px;top:207px;width:1px;height:18px;background:#b8b8b8;"></div>
<span style="left:578.78px;top:208.00px;font-size:12.8px;line-height:17px;color:#262626;white-space:pre;">H</span>
<div style="left:686px;top:207px;width:1px;height:18px;background:#b8b8b8;"></div>
<span style="left:650.62px;top:208.00px;font-size:12.8px;line-height:17px;color:#262626;white-space:pre;">I</span>
<div style="left:755px;top:207px;width:1px;height:18px;background:#b8b8b8;"></div>
<span style="left:718.20px;top:208.00px;font-size:12.8px;line-height:17px;color:#262626;white-space:pre;">J</span>
<div style="left:823px;top:207px;width:1px;height:18px;background:#b8b8b8;"></div>
<span style="left:785.63px;top:208.00px;font-size:12.8px;line-height:17px;color:#262626;white-space:pre;">K</span>
<div style="left:892px;top:207px;width:1px;height:18px;background:#b8b8b8;"></div>
<span style="left:854.89px;top:208.00px;font-size:12.8px;line-height:17px;color:#262626;white-space:pre;">L</span>
<div style="left:961px;top:207px;width:1px;height:18px;background:#b8b8b8;"></div>
<span style="left:922.12px;top:208.00px;font-size:12.8px;line-height:17px;color:#262626;white-space:pre;">M</span>
<div style="left:1030px;top:207px;width:1px;height:18px;background:#b8b8b8;"></div>
<span style="left:991.78px;top:208.00px;font-size:12.8px;line-height:17px;color:#262626;white-space:pre;">N</span>
<div style="left:1099px;top:207px;width:1px;height:18px;background:#b8b8b8;"></div>
<span style="left:1060.42px;top:208.00px;font-size:12.8px;line-height:17px;color:#262626;white-space:pre;">O</span>
<div style="left:1109px;top:207px;width:1px;height:18px;background:#b8b8b8;"></div>
<span style="left:1100.68px;top:208.00px;font-size:12.8px;line-height:17px;color:#262626;white-space:pre;">P</span>
<div style="left:1188px;top:207px;width:1px;height:18px;background:#b8b8b8;"></div>
<span style="left:1144.17px;top:208.00px;font-size:12.8px;line-height:17px;color:#262626;white-space:pre;">Q</span>
<div style="left:1232px;top:207px;width:1px;height:18px;background:#b8b8b8;"></div>
<span style="left:1205.98px;top:208.00px;font-size:12.8px;line-height:17px;color:#262626;white-space:pre;">R</span>
<div style="left:1317px;top:207px;width:1px;height:18px;background:#b8b8b8;"></div>
<span style="left:1271.03px;top:208.00px;font-size:12.8px;line-height:17px;color:#262626;white-space:pre;">S</span>
<div style="left:0px;top:225px;width:1345px;height:1px;background:#b8b8b8;"></div>
<div style="left:0px;top:272px;width:25px;height:1px;background:#b8b8b8;"></div>
<div style="left:0px;top:227px;width:25px;height:45px;overflow:hidden;"><div style="left:0px;top:-227px;width:1366px;height:768px;">
<span style="left:9.34px;top:255.00px;font-size:12.8px;line-height:17px;color:#217346;white-space:pre;">1</span>
</div></div>
<div style="left:0px;top:308px;width:25px;height:1px;background:#b8b8b8;"></div>
<div style="left:0px;top:273px;width:25px;height:35px;overflow:hidden;"><div style="left:0px;top:-273px;width:1366px;height:768px;">
<span style="left:9.34px;top:291.00px;font-size:12.8px;line-height:17px;color:#262626;white-space:pre;">2</span>
</div></div>
<div style="left:0px;top:314px;width:25px;height:1px;background:#b8b8b8;"></div>
<div style="left:0px;top:309px;width:25px;height:5px;overflow:hidden;"><div style="left:0px;top:-309px;width:1366px;height:768px;">
<span style="left:9.34px;top:297.00px;font-size:12.8px;line-height:17px;color:#262626;white-space:pre;">3</span>
</div></div>
<div style="left:0px;top:341px;width:25px;height:1px;background:#b8b8b8;"></div>
<div style="left:0px;top:315px;width:25px;height:26px;overflow:hidden;"><div style="left:0px;top:-315px;width:1366px;height:768px;">
<span style="left:9.34px;top:324.00px;font-size:12.8px;line-height:17px;color:#262626;white-space:pre;">4</span>
</div></div>
<div style="left:0px;top:371px;width:25px;height:1px;background:#b8b8b8;"></div>
<div style="left:0px;top:342px;width:25px;height:29px;overflow:hidden;"><div style="left:0px;top:-342px;width:1366px;height:768px;">
<span style="left:9.34px;top:354.00px;font-size:12.8px;line-height:17px;color:#262626;white-space:pre;">5</span>
</div></div>
<div style="left:0px;top:401px;width:25px;height:1px;background:#b8b8b8;"></div>
<div style="left:0px;top:372px;width:25px;height:29px;overflow:hidden;"><div style="left:0px;top:-372px;width:1366px;height:768px;">
<span style="left:9.34px;top:384.00px;font-size:12.8px;line-height:17px;color:#262626;white-space:pre;">6</span>
</div></div>
<div style="left:0px;top:407px;width:25px;height:1px;background:#b8b8b8;"></div>
<div style="left:0px;top:402px;width:25px;height:5px;overflow:hidden;"><div style="left:0px;top:-402px;width:1366px;height:768px;">
<span style="left:9.34px;top:390.00px;font-size:12.8px;line-height:17px;color:#262626;white-space:pre;">7</span>
</div></div>
<div style="left:0px;top:434px;width:25px;height:1px;background:#b8b8b8;"></div>
<div style="left:0px;top:408px;width:25px;height:26px;overflow:hidden;"><div style="left:0px;top:-408px;width:1366px;height:768px;">
<span style="left:9.34px;top:417.00px;font-size:12.8px;line-height:17px;color:#262626;white-space:pre;">8</span>
</div></div>
<div style="left:0px;top:464px;width:25px;height:1px;background:#b8b8b8;"></div>
<div style="left:0px;top:435px;width:25px;height:29px;overflow:hidden;"><div style="left:0px;top:-435px;width:1366px;height:768px;">
<span style="left:9.34px;top:447.00px;font-size:12.8px;line-height:17px;color:#262626;white-space:pre;">9</span>
</div></div>
<div style="left:0px;top:494px;width:25px;height:1px;background:#b8b8b8;"></div>
<div style="left:0px;top:465px;width:25px;height:29px;overflow:hidden;"><div style="left:0px;top:-465px;width:1366px;height:768px;">
<span style="left:5.78px;top:477.00px;font-size:12.8px;line-height:17px;color:#262626;white-space:pre;">10</span>
</div></div>
<div style="left:0px;top:500px;width:25px;height:1px;background:#b8b8b8;"></div>
<div style="left:0px;top:495px;width:25px;height:5px;overflow:hidden;"><div style="left:0px;top:-495px;width:1366px;height:768px;">
<span style="left:6.26px;top:483.00px;font-size:12.8px;line-height:17px;color:#262626;white-space:pre;">11</span>
</div></div>
<div style="left:0px;top:527px;width:25px;height:1px;background:#b8b8b8;"></div>
<div style="left:0px;top:501px;width:25px;height:26px;overflow:hidden;"><div style="left:0px;top:-501px;width:1366px;height:768px;">
<span style="left:5.78px;top:510.00px;font-size:12.8px;line-height:17px;color:#262626;white-space:pre;">12</span>
</div></div>
<div style="left:0px;top:557px;width:25px;height:1px;background:#b8b8b8;"></div>
<div style="left:0px;top:528px;width:25px;height:29px;overflow:hidden;"><div style="left:0px;top:-528px;width:1366px;height:768px;">
<span style="left:5.78px;top:540.00px;font-size:12.8px;line-height:17px;color:#262626;white-space:pre;">13</span>
</div></div>
<div style="left:0px;top:587px;width:25px;height:1px;background:#b8b8b8;"></div>
<div style="left:0px;top:558px;width:25px;height:29px;overflow:hidden;"><div style="left:0px;top:-558px;width:1366px;height:768px;">
<span style="left:5.78px;top:570.00px;font-size:12.8px;line-height:17px;color:#262626;white-space:pre;">14</span>
</div></div>
<div style="left:0px;top:593px;width:25px;height:1px;background:#b8b8b8;"></div>
<div style="left:0px;top:588px;width:25px;height:5px;overflow:hidden;"><div style="left:0px;top:-588px;width:1366px;height:768px;">
<span style="left:5.78px;top:576.00px;font-size:12.8px;line-height:17px;color:#262626;white-space:pre;">15</span>
</div></div>
<div style="left:0px;top:620px;width:25px;height:1px;background:#b8b8b8;"></div>
<div style="left:0px;top:594px;width:25px;height:26px;overflow:hidden;"><div style="left:0px;top:-594px;width:1366px;height:768px;">
<span style="left:5.78px;top:603.00px;font-size:12.8px;line-height:17px;color:#262626;white-space:pre;">16</span>
</div></div>
<div style="left:0px;top:650px;width:25px;height:1px;background:#b8b8b8;"></div>
<div style="left:0px;top:621px;width:25px;height:29px;overflow:hidden;"><div style="left:0px;top:-621px;width:1366px;height:768px;">
<span style="left:5.78px;top:633.00px;font-size:12.8px;line-height:17px;color:#262626;white-space:pre;">17</span>
</div></div>
<div style="left:0px;top:680px;width:25px;height:1px;background:#b8b8b8;"></div>
<div style="left:0px;top:651px;width:25px;height:29px;overflow:hidden;"><div style="left:0px;top:-651px;width:1366px;height:768px;">
<span style="left:5.78px;top:663.00px;font-size:12.8px;line-height:17px;color:#262626;white-space:pre;">18</span>
</div></div>
<div style="left:0px;top:699px;width:25px;height:1px;background:#b8b8b8;"></div>
<div style="left:0px;top:681px;width:25px;height:18px;overflow:hidden;"><div style="left:0px;top:-681px;width:1366px;height:768px;">
<span style="left:5.78px;top:682.00px;font-size:12.8px;line-height:17px;color:#262626;white-space:pre;">19</span>
</div></div>
<div style="left:0px;top:700px;width:25px;height:17px;overflow:hidden;"><div style="left:0px;top:-700px;width:1366px;height:768px;">
<span style="left:5.78px;top:710.00px;font-size:12.8px;line-height:17px;color:#262626;white-space:pre;">20</span>
</div></div>
<div style="left:25px;top:226px;width:1px;height:491px;background:#b8b8b8;"></div>
<div style="left:26px;top:226px;width:1318px;height:46px;background:#404040;"></div>
<div style="left:26px;top:272px;width:1318px;height:36px;background:#6699cc;"></div>
<div style="left:606px;top:226px;width:98px;height:46px;background:#6699cc;"></div>
<div style="left:141px;top:281px;width:187px;height:27px;background:#fff;"></div>
<div style="left:26px;top:308px;width:1318px;height:1px;background:#a6a6a6;"></div>
<div style="left:24px;top:224px;width:18px;height:50px;border:2px solid #217346;box-sizing:border-box;"></div>
<div style="left:26px;top:226px;width:14px;height:46px;border:1px solid #fff;box-sizing:border-box;"></div>
<div style="left:37px;top:269px;width:6px;height:6px;background:#fff;"></div>
<div style="left:38px;top:270px;width:5px;height:5px;background:#217346;"></div>
<svg style="left:42px;top:236.5px;" width="18" height="26" viewBox="0 0 18 26"><path d="M1.55 6.6V5.5Q1.55 1.55 5.5 1.55H12.4Q16.35 1.55 16.35 5.5V6.6 M1.55 8.2V15Q1.55 19.7 6.5 19.7H11.4Q16.35 19.7 16.35 15V8.2" fill="none" stroke="#fff" stroke-width="1.9"/><path d="M6 22H12 M7 23.5H11.2 M8 24.9H10.2" stroke="#fff" stroke-width="1.1"/></svg>
<span style="left:63.80px;top:240.00px;font-size:13.6px;line-height:17px;color:#fff;white-space:pre;transform:rotate(0.03deg) scale(0.9108,1);transform-origin:left 13px;">LUZ</span>
<div style="left:91px;top:241px;width:2px;height:15px;background:#8c8c8c;"></div>
<span style="left:96.00px;top:242.00px;font-size:5.9px;line-height:8px;color:#bdbdbd;white-space:pre;transform:rotate(0.03deg) scale(0.9523,1);transform-origin:left 6px;">Planilhas</span>
<span style="left:96.00px;top:248.00px;font-size:5.9px;line-height:8px;color:#bdbdbd;white-space:pre;transform:rotate(0.03deg) scale(0.9557,1);transform-origin:left 6px;">Empresariais</span>
<span style="left:182.35px;top:235.00px;font-size:10.7px;line-height:14px;color:#fff;white-space:pre;font-weight:bold;transform:rotate(0.03deg) scale(0.9622,1);transform-origin:center 11px;">ÁREAS DE</span>
<span style="left:190.19px;top:251.00px;font-size:10.7px;line-height:14px;color:#fff;white-space:pre;font-weight:bold;transform:rotate(0.03deg) scale(0.9942,1);transform-origin:center 11px;">RATEIO</span>
<span style="left:287.23px;top:235.00px;font-size:10.7px;line-height:14px;color:#fff;white-space:pre;font-weight:bold;transform:rotate(0.03deg) scale(1.0451,1);transform-origin:center 11px;">ORÇAMENTO</span>
<span style="left:283.26px;top:251.00px;font-size:10.7px;line-height:14px;color:#fff;white-space:pre;font-weight:bold;transform:rotate(0.03deg) scale(0.9951,1);transform-origin:center 11px;">EMPRESARIAL</span>
<span style="left:411.01px;top:235.00px;font-size:10.7px;line-height:14px;color:#fff;white-space:pre;font-weight:bold;transform:rotate(0.03deg) scale(1.0309,1);transform-origin:center 11px;">RESULTADO</span>
<span style="left:410.21px;top:251.00px;font-size:10.7px;line-height:14px;color:#fff;white-space:pre;font-weight:bold;transform:rotate(0.03deg) scale(1.0364,1);transform-origin:center 11px;">FINANCEIRO</span>
<span style="left:519.82px;top:243.00px;font-size:10.7px;line-height:14px;color:#fff;white-space:pre;font-weight:bold;transform:rotate(0.03deg) scale(0.9949,1);transform-origin:center 11px;">RELATÓRIOS</span>
<span style="left:619.82px;top:243.00px;font-size:10.7px;line-height:14px;color:#fff;white-space:pre;font-weight:bold;transform:rotate(0.03deg) scale(1.0165,1);transform-origin:center 11px;">DASHBOARD</span>
<span style="left:719.12px;top:243.00px;font-size:10.7px;line-height:14px;color:#fff;white-space:pre;font-weight:bold;transform:rotate(0.03deg) scale(0.9936,1);transform-origin:center 11px;">INSTRUÇÕES</span>
<span style="left:168.44px;top:289.00px;font-size:11.6px;line-height:14px;color:#404040;white-space:pre;font-weight:bold;transform:scale(0.9250,1);transform-origin:center 11px;">ORÇADO x REALIZADO</span>
<div style="left:50px;top:341px;width:204px;height:61px;background:#f2f2f2;border:1px solid #d9d9d9;box-sizing:border-box;"></div>
<span style="left:64.30px;top:321.00px;font-size:13.1px;line-height:17px;color:#000;white-space:pre;font-weight:bold;transform:rotate(0.03deg) scale(1.0729,1);transform-origin:left 13px;">Receita orçada</span>
<span style="left:90.30px;top:359.00px;font-size:22.4px;line-height:27px;color:#404040;white-space:pre;font-weight:bold;transform:rotate(0.03deg) scale(0.9080,1);transform-origin:left 21px;">R$</span>
<span style="left:124.80px;top:359.00px;font-size:22.4px;line-height:27px;color:#404040;white-space:pre;font-weight:bold;transform:rotate(0.03deg) scale(1.0264,1);transform-origin:left 21px;">1.800,00</span>
<div style="left:263px;top:341px;width:207px;height:61px;background:#f2f2f2;border:1px solid #d9d9d9;box-sizing:border-box;"></div>
<span style="left:277.30px;top:321.00px;font-size:13.1px;line-height:17px;color:#000;white-space:pre;font-weight:bold;transform:rotate(0.03deg) scale(1.0770,1);transform-origin:left 13px;">Receita realizada</span>
<span style="left:305.20px;top:359.00px;font-size:22.4px;line-height:27px;color:#404040;white-space:pre;font-weight:bold;transform:rotate(0.03deg) scale(0.9080,1);transform-origin:left 21px;">R$</span>
<span style="left:339.70px;top:359.00px;font-size:22.4px;line-height:27px;color:#404040;white-space:pre;font-weight:bold;transform:rotate(0.03deg) scale(1.0264,1);transform-origin:left 21px;">2.390,00</span>
<div style="left:50px;top:434px;width:204px;height:61px;background:#f2f2f2;border:1px solid #d9d9d9;box-sizing:border-box;"></div>
<span style="left:64.30px;top:414.00px;font-size:13.1px;line-height:17px;color:#000;white-space:pre;font-weight:bold;transform:rotate(0.03deg) scale(1.0718,1);transform-origin:left 13px;">Gasto orçado</span>
<span style="left:100.05px;top:452.00px;font-size:22.4px;line-height:27px;color:#404040;white-space:pre;font-weight:bold;transform:rotate(0.03deg) scale(0.9080,1);transform-origin:left 21px;">R$</span>
<span style="left:134.55px;top:452.00px;font-size:22.4px;line-height:27px;color:#404040;white-space:pre;font-weight:bold;transform:rotate(0.03deg) scale(1.0217,1);transform-origin:left 21px;">600,00</span>
<div style="left:263px;top:434px;width:207px;height:61px;background:#f2f2f2;border:1px solid #d9d9d9;box-sizing:border-box;"></div>
<span style="left:277.30px;top:414.00px;font-size:13.1px;line-height:17px;color:#000;white-space:pre;font-weight:bold;transform:rotate(0.03deg) scale(1.0712,1);transform-origin:left 13px;">Gasto realizado</span>
<span style="left:314.95px;top:452.00px;font-size:22.4px;line-height:27px;color:#404040;white-space:pre;font-weight:bold;transform:rotate(0.03deg) scale(0.9080,1);transform-origin:left 21px;">R$</span>
<span style="left:349.45px;top:452.00px;font-size:22.4px;line-height:27px;color:#404040;white-space:pre;font-weight:bold;transform:rotate(0.03deg) scale(1.0217,1);transform-origin:left 21px;">550,00</span>
<div style="left:50px;top:527px;width:204px;height:61px;background:#f2f2f2;border:1px solid #d9d9d9;box-sizing:border-box;"></div>
<span style="left:64.30px;top:507.00px;font-size:13.1px;line-height:17px;color:#000;white-space:pre;font-weight:bold;transform:rotate(0.03deg) scale(1.1045,1);transform-origin:left 13px;">Investimento orçado</span>
<span style="left:100.05px;top:545.00px;font-size:22.4px;line-height:27px;color:#404040;white-space:pre;font-weight:bold;transform:rotate(0.03deg) scale(0.9080,1);transform-origin:left 21px;">R$</span>
<span style="left:134.55px;top:545.00px;font-size:22.4px;line-height:27px;color:#404040;white-space:pre;font-weight:bold;transform:rotate(0.03deg) scale(1.0217,1);transform-origin:left 21px;">300,00</span>
<div style="left:263px;top:527px;width:207px;height:61px;background:#f2f2f2;border:1px solid #d9d9d9;box-sizing:border-box;"></div>
<span style="left:277.30px;top:507.00px;font-size:13.1px;line-height:17px;color:#000;white-space:pre;font-weight:bold;transform:rotate(0.03deg) scale(1.1011,1);transform-origin:left 13px;">Investimento realizado</span>
<span style="left:314.95px;top:545.00px;font-size:22.4px;line-height:27px;color:#404040;white-space:pre;font-weight:bold;transform:rotate(0.03deg) scale(0.9080,1);transform-origin:left 21px;">R$</span>
<span style="left:349.45px;top:545.00px;font-size:22.4px;line-height:27px;color:#404040;white-space:pre;font-weight:bold;transform:rotate(0.03deg) scale(1.0217,1);transform-origin:left 21px;">345,00</span>
<div style="left:50px;top:620px;width:204px;height:61px;background:#f2f2f2;border:1px solid #d9d9d9;box-sizing:border-box;"></div>
<span style="left:64.30px;top:600.00px;font-size:13.1px;line-height:17px;color:#000;white-space:pre;font-weight:bold;transform:rotate(0.03deg) scale(1.0801,1);transform-origin:left 13px;">Resultado orçado</span>
<span style="left:100.05px;top:638.00px;font-size:22.4px;line-height:27px;color:#404040;white-space:pre;font-weight:bold;transform:rotate(0.03deg) scale(0.9080,1);transform-origin:left 21px;">R$</span>
<span style="left:134.55px;top:638.00px;font-size:22.4px;line-height:27px;color:#404040;white-space:pre;font-weight:bold;transform:rotate(0.03deg) scale(1.0217,1);transform-origin:left 21px;">900,00</span>
<div style="left:263px;top:620px;width:207px;height:61px;background:#f2f2f2;border:1px solid #d9d9d9;box-sizing:border-box;"></div>
<span style="left:277.30px;top:600.00px;font-size:13.1px;line-height:17px;color:#000;white-space:pre;font-weight:bold;transform:rotate(0.03deg) scale(1.0788,1);transform-origin:left 13px;">Resultado realizado</span>
<span style="left:305.20px;top:638.00px;font-size:22.4px;line-height:27px;color:#404040;white-space:pre;font-weight:bold;transform:rotate(0.03deg) scale(0.9080,1);transform-origin:left 21px;">R$</span>
<span style="left:339.70px;top:638.00px;font-size:22.4px;line-height:27px;color:#404040;white-space:pre;font-weight:bold;transform:rotate(0.03deg) scale(1.0264,1);transform-origin:left 21px;">1.495,00</span>
<span style="left:493.40px;top:321.00px;font-size:13.1px;line-height:17px;color:#000;white-space:pre;font-weight:bold;transform:rotate(0.03deg) scale(1.0838,1);transform-origin:left 13px;">Evolução de receitas orçada x real mensalmente</span>
<span style="left:493.40px;top:507.00px;font-size:13.1px;line-height:17px;color:#000;white-space:pre;font-weight:bold;transform:rotate(0.03deg) scale(1.0772,1);transform-origin:left 13px;">Evolução de gastos orçado x real mensalmente</span>
<span style="left:1123.40px;top:321.00px;font-size:13.1px;line-height:17px;color:#000;white-space:pre;font-weight:bold;transform:rotate(0.03deg) scale(1.0723,1);transform-origin:left 13px;">Consolidado orçado x real</span>
<div style="left:479px;top:342px;width:621px;height:153px;background:#fff;border:1px solid #d9d9d9;box-sizing:border-box;"></div>
<div style="left:487px;top:355px;width:604px;height:92px;background:#f2f2f2;"></div>
<div style="left:487px;top:447px;width:604px;height:1px;background:#d9d9d9;"></div>
<div style="left:493px;top:392px;width:19px;height:55px;background:#c5e0b4;"></div>
<div style="left:512px;top:370px;width:19px;height:77px;background:#54ae3f;"></div>
<span style="left:494.16px;top:374.00px;font-size:10px;line-height:13px;color:#404040;white-space:pre;transform:rotate(0.03deg) scale(0.9656,1);transform-origin:center 10px;">150</span>
<span style="left:513.46px;top:352.00px;font-size:10px;line-height:13px;color:#404040;white-space:pre;transform:rotate(0.03deg) scale(0.9656,1);transform-origin:center 10px;">210</span>
<span style="left:495.78px;top:455.00px;font-size:10px;line-height:13px;color:#595959;white-space:pre;transform:rotate(0.03deg) scale(0.9909,1);transform-origin:center 10px;">Janeiro</span>
<div style="left:544px;top:392px;width:19px;height:55px;background:#c5e0b4;"></div>
<div style="left:563px;top:418px;width:18px;height:29px;background:#54ae3f;"></div>
<span style="left:545.16px;top:374.00px;font-size:10px;line-height:13px;color:#404040;white-space:pre;transform:rotate(0.03deg) scale(0.9656,1);transform-origin:center 10px;">150</span>
<span style="left:566.74px;top:400.00px;font-size:10px;line-height:13px;color:#404040;white-space:pre;transform:rotate(0.03deg) scale(0.9656,1);transform-origin:center 10px;">80</span>
<span style="left:541.41px;top:455.00px;font-size:10px;line-height:13px;color:#595959;white-space:pre;transform:rotate(0.03deg) scale(0.9944,1);transform-origin:center 10px;">Fevereiro</span>
<div style="left:594px;top:392px;width:19px;height:55px;background:#c5e0b4;"></div>
<div style="left:613px;top:370px;width:19px;height:77px;background:#54ae3f;"></div>
<span style="left:595.16px;top:374.00px;font-size:10px;line-height:13px;color:#404040;white-space:pre;transform:rotate(0.03deg) scale(0.9656,1);transform-origin:center 10px;">150</span>
<span style="left:614.46px;top:352.00px;font-size:10px;line-height:13px;color:#404040;white-space:pre;transform:rotate(0.03deg) scale(0.9656,1);transform-origin:center 10px;">210</span>
<span style="left:598.98px;top:455.00px;font-size:10px;line-height:13px;color:#595959;white-space:pre;transform:rotate(0.03deg) scale(1.0438,1);transform-origin:center 10px;">Março</span>
<div style="left:644px;top:392px;width:19px;height:55px;background:#c5e0b4;"></div>
<div style="left:663px;top:370px;width:19px;height:77px;background:#54ae3f;"></div>
<span style="left:645.16px;top:374.00px;font-size:10px;line-height:13px;color:#404040;white-space:pre;transform:rotate(0.03deg) scale(0.9656,1);transform-origin:center 10px;">150</span>
<span style="left:664.46px;top:352.00px;font-size:10px;line-height:13px;color:#404040;white-space:pre;transform:rotate(0.03deg) scale(0.9656,1);transform-origin:center 10px;">210</span>
<span style="left:653.22px;top:455.00px;font-size:10px;line-height:13px;color:#595959;white-space:pre;transform:rotate(0.03deg) scale(1.0247,1);transform-origin:center 10px;">Abril</span>
<div style="left:695px;top:392px;width:19px;height:55px;background:#c5e0b4;"></div>
<div style="left:714px;top:370px;width:18px;height:77px;background:#54ae3f;"></div>
<span style="left:696.16px;top:374.00px;font-size:10px;line-height:13px;color:#404040;white-space:pre;transform:rotate(0.03deg) scale(0.9656,1);transform-origin:center 10px;">150</span>
<span style="left:714.96px;top:352.00px;font-size:10px;line-height:13px;color:#404040;white-space:pre;transform:rotate(0.03deg) scale(0.9656,1);transform-origin:center 10px;">210</span>
<span style="left:702.74px;top:455.00px;font-size:10px;line-height:13px;color:#595959;white-space:pre;transform:rotate(0.03deg) scale(1.0381,1);transform-origin:center 10px;">Maio</span>
<div style="left:745px;top:392px;width:19px;height:55px;background:#c5e0b4;"></div>
<div style="left:764px;top:370px;width:19px;height:77px;background:#54ae3f;"></div>
<span style="left:746.16px;top:374.00px;font-size:10px;line-height:13px;color:#404040;white-space:pre;transform:rotate(0.03deg) scale(0.9656,1);transform-origin:center 10px;">150</span>
<span style="left:765.46px;top:352.00px;font-size:10px;line-height:13px;color:#404040;white-space:pre;transform:rotate(0.03deg) scale(0.9656,1);transform-origin:center 10px;">210</span>
<span style="left:750.30px;top:455.00px;font-size:10px;line-height:13px;color:#595959;white-space:pre;transform:rotate(0.03deg) scale(0.9543,1);transform-origin:center 10px;">Junho</span>
<div style="left:796px;top:392px;width:18px;height:55px;background:#c5e0b4;"></div>
<div style="left:814px;top:370px;width:19px;height:77px;background:#54ae3f;"></div>
<span style="left:796.66px;top:374.00px;font-size:10px;line-height:13px;color:#404040;white-space:pre;transform:rotate(0.03deg) scale(0.9656,1);transform-origin:center 10px;">150</span>
<span style="left:815.46px;top:352.00px;font-size:10px;line-height:13px;color:#404040;white-space:pre;transform:rotate(0.03deg) scale(0.9656,1);transform-origin:center 10px;">210</span>
<span style="left:802.32px;top:455.00px;font-size:10px;line-height:13px;color:#595959;white-space:pre;transform:rotate(0.03deg) scale(0.9621,1);transform-origin:center 10px;">Julho</span>
<div style="left:846px;top:392px;width:19px;height:55px;background:#c5e0b4;"></div>
<div style="left:865px;top:370px;width:18px;height:77px;background:#54ae3f;"></div>
<span style="left:847.16px;top:374.00px;font-size:10px;line-height:13px;color:#404040;white-space:pre;transform:rotate(0.03deg) scale(0.9656,1);transform-origin:center 10px;">150</span>
<span style="left:865.96px;top:352.00px;font-size:10px;line-height:13px;color:#404040;white-space:pre;transform:rotate(0.03deg) scale(0.9656,1);transform-origin:center 10px;">210</span>
<span style="left:849.06px;top:455.00px;font-size:10px;line-height:13px;color:#595959;white-space:pre;transform:rotate(0.03deg) scale(1.0118,1);transform-origin:center 10px;">Agosto</span>
<div style="left:896px;top:392px;width:19px;height:55px;background:#c5e0b4;"></div>
<div style="left:915px;top:370px;width:19px;height:77px;background:#54ae3f;"></div>
<span style="left:897.16px;top:374.00px;font-size:10px;line-height:13px;color:#404040;white-space:pre;transform:rotate(0.03deg) scale(0.9656,1);transform-origin:center 10px;">150</span>
<span style="left:916.46px;top:352.00px;font-size:10px;line-height:13px;color:#404040;white-space:pre;transform:rotate(0.03deg) scale(0.9656,1);transform-origin:center 10px;">210</span>
<span style="left:893.30px;top:455.00px;font-size:10px;line-height:13px;color:#595959;white-space:pre;transform:rotate(0.03deg) scale(0.9918,1);transform-origin:center 10px;">Setembro</span>
<div style="left:947px;top:392px;width:18px;height:55px;background:#c5e0b4;"></div>
<div style="left:965px;top:370px;width:19px;height:77px;background:#54ae3f;"></div>
<span style="left:947.66px;top:374.00px;font-size:10px;line-height:13px;color:#404040;white-space:pre;transform:rotate(0.03deg) scale(0.9656,1);transform-origin:center 10px;">150</span>
<span style="left:966.46px;top:352.00px;font-size:10px;line-height:13px;color:#404040;white-space:pre;transform:rotate(0.03deg) scale(0.9656,1);transform-origin:center 10px;">210</span>
<span style="left:947.26px;top:455.00px;font-size:10px;line-height:13px;color:#595959;white-space:pre;transform:rotate(0.03deg) scale(1.0517,1);transform-origin:center 10px;">Outubro</span>
<div style="left:997px;top:392px;width:19px;height:55px;background:#c5e0b4;"></div>
<div style="left:1016px;top:370px;width:18px;height:77px;background:#54ae3f;"></div>
<span style="left:998.16px;top:374.00px;font-size:10px;line-height:13px;color:#404040;white-space:pre;transform:rotate(0.03deg) scale(0.9656,1);transform-origin:center 10px;">150</span>
<span style="left:1016.96px;top:352.00px;font-size:10px;line-height:13px;color:#404040;white-space:pre;transform:rotate(0.03deg) scale(0.9656,1);transform-origin:center 10px;">210</span>
<span style="left:992.61px;top:455.00px;font-size:10px;line-height:13px;color:#595959;white-space:pre;transform:rotate(0.03deg) scale(1.0081,1);transform-origin:center 10px;">Novembro</span>
<div style="left:1047px;top:392px;width:19px;height:55px;background:#c5e0b4;"></div>
<div style="left:1066px;top:370px;width:19px;height:77px;background:#54ae3f;"></div>
<span style="left:1048.16px;top:374.00px;font-size:10px;line-height:13px;color:#404040;white-space:pre;transform:rotate(0.03deg) scale(0.9656,1);transform-origin:center 10px;">150</span>
<span style="left:1067.46px;top:352.00px;font-size:10px;line-height:13px;color:#404040;white-space:pre;transform:rotate(0.03deg) scale(0.9656,1);transform-origin:center 10px;">210</span>
<span style="left:1042.96px;top:455.00px;font-size:10px;line-height:13px;color:#595959;white-space:pre;transform:rotate(0.03deg) scale(0.9864,1);transform-origin:center 10px;">Dezembro</span>
<div style="left:706.2px;top:481px;width:6px;height:6px;background:#c5e0b4;"></div>
<span style="left:714.80px;top:477.00px;font-size:10px;line-height:13px;color:#595959;white-space:pre;transform:rotate(0.03deg) scale(0.9679,1);transform-origin:left 10px;">Receita orçado</span>
<div style="left:794.8px;top:481px;width:6px;height:6px;background:#54ae3f;"></div>
<span style="left:803.40px;top:477.00px;font-size:10px;line-height:13px;color:#595959;white-space:pre;transform:rotate(0.03deg) scale(0.9616,1);transform-origin:left 10px;">Receita realizado</span>
<div style="left:479px;top:527px;width:621px;height:153px;background:#fff;border:1px solid #d9d9d9;box-sizing:border-box;"></div>
<div style="left:487px;top:540px;width:604px;height:92px;background:#f2f2f2;"></div>
<div style="left:487px;top:632px;width:604px;height:1px;background:#d9d9d9;"></div>
<div style="left:493px;top:602px;width:19px;height:30px;background:#f8cbad;"></div>
<div style="left:512px;top:608px;width:19px;height:24px;background:#f0452e;"></div>
<span style="left:496.94px;top:583.00px;font-size:10px;line-height:13px;color:#404040;white-space:pre;transform:rotate(0.03deg) scale(0.9656,1);transform-origin:center 10px;">50</span>
<span style="left:516.24px;top:590.00px;font-size:10px;line-height:13px;color:#404040;white-space:pre;transform:rotate(0.03deg) scale(0.9656,1);transform-origin:center 10px;">40</span>
<span style="left:495.78px;top:640.00px;font-size:10px;line-height:13px;color:#595959;white-space:pre;transform:rotate(0.03deg) scale(0.9909,1);transform-origin:center 10px;">Janeiro</span>
<div style="left:544px;top:602px;width:19px;height:30px;background:#f8cbad;"></div>
<div style="left:563px;top:608px;width:18px;height:24px;background:#f0452e;"></div>
<span style="left:547.94px;top:583.00px;font-size:10px;line-height:13px;color:#404040;white-space:pre;transform:rotate(0.03deg) scale(0.9656,1);transform-origin:center 10px;">50</span>
<span style="left:566.74px;top:590.00px;font-size:10px;line-height:13px;color:#404040;white-space:pre;transform:rotate(0.03deg) scale(0.9656,1);transform-origin:center 10px;">40</span>
<span style="left:541.41px;top:640.00px;font-size:10px;line-height:13px;color:#595959;white-space:pre;transform:rotate(0.03deg) scale(0.9944,1);transform-origin:center 10px;">Fevereiro</span>
<div style="left:594px;top:602px;width:19px;height:30px;background:#f8cbad;"></div>
<div style="left:613px;top:608px;width:19px;height:24px;background:#f0452e;"></div>
<span style="left:597.94px;top:583.00px;font-size:10px;line-height:13px;color:#404040;white-space:pre;transform:rotate(0.03deg) scale(0.9656,1);transform-origin:center 10px;">50</span>
<span style="left:617.24px;top:590.00px;font-size:10px;line-height:13px;color:#404040;white-space:pre;transform:rotate(0.03deg) scale(0.9656,1);transform-origin:center 10px;">40</span>
<span style="left:598.98px;top:640.00px;font-size:10px;line-height:13px;color:#595959;white-space:pre;transform:rotate(0.03deg) scale(1.0438,1);transform-origin:center 10px;">Março</span>
<div style="left:644px;top:602px;width:19px;height:30px;background:#f8cbad;"></div>
<div style="left:663px;top:565px;width:19px;height:67px;background:#f0452e;"></div>
<span style="left:647.94px;top:583.00px;font-size:10px;line-height:13px;color:#404040;white-space:pre;transform:rotate(0.03deg) scale(0.9656,1);transform-origin:center 10px;">50</span>
<span style="left:664.83px;top:547.00px;font-size:10px;line-height:13px;color:#404040;white-space:pre;transform:rotate(0.03deg) scale(1.0105,1);transform-origin:center 10px;">110</span>
<span style="left:653.22px;top:640.00px;font-size:10px;line-height:13px;color:#595959;white-space:pre;transform:rotate(0.03deg) scale(1.0247,1);transform-origin:center 10px;">Abril</span>
<div style="left:695px;top:602px;width:19px;height:30px;background:#f8cbad;"></div>
<div style="left:714px;top:608px;width:18px;height:24px;background:#f0452e;"></div>
<span style="left:698.94px;top:583.00px;font-size:10px;line-height:13px;color:#404040;white-space:pre;transform:rotate(0.03deg) scale(0.9656,1);transform-origin:center 10px;">50</span>
<span style="left:717.74px;top:590.00px;font-size:10px;line-height:13px;color:#404040;white-space:pre;transform:rotate(0.03deg) scale(0.9656,1);transform-origin:center 10px;">40</span>
<span style="left:702.74px;top:640.00px;font-size:10px;line-height:13px;color:#595959;white-space:pre;transform:rotate(0.03deg) scale(1.0381,1);transform-origin:center 10px;">Maio</span>
<div style="left:745px;top:602px;width:19px;height:30px;background:#f8cbad;"></div>
<div style="left:764px;top:608px;width:19px;height:24px;background:#f0452e;"></div>
<span style="left:748.94px;top:583.00px;font-size:10px;line-height:13px;color:#404040;white-space:pre;transform:rotate(0.03deg) scale(0.9656,1);transform-origin:center 10px;">50</span>
<span style="left:768.24px;top:590.00px;font-size:10px;line-height:13px;color:#404040;white-space:pre;transform:rotate(0.03deg) scale(0.9656,1);transform-origin:center 10px;">40</span>
<span style="left:750.30px;top:640.00px;font-size:10px;line-height:13px;color:#595959;white-space:pre;transform:rotate(0.03deg) scale(0.9543,1);transform-origin:center 10px;">Junho</span>
<div style="left:796px;top:602px;width:18px;height:30px;background:#f8cbad;"></div>
<div style="left:814px;top:608px;width:19px;height:24px;background:#f0452e;"></div>
<span style="left:799.44px;top:583.00px;font-size:10px;line-height:13px;color:#404040;white-space:pre;transform:rotate(0.03deg) scale(0.9656,1);transform-origin:center 10px;">50</span>
<span style="left:818.24px;top:590.00px;font-size:10px;line-height:13px;color:#404040;white-space:pre;transform:rotate(0.03deg) scale(0.9656,1);transform-origin:center 10px;">40</span>
<span style="left:802.32px;top:640.00px;font-size:10px;line-height:13px;color:#595959;white-space:pre;transform:rotate(0.03deg) scale(0.9621,1);transform-origin:center 10px;">Julho</span>
<div style="left:846px;top:602px;width:19px;height:30px;background:#f8cbad;"></div>
<div style="left:865px;top:608px;width:18px;height:24px;background:#f0452e;"></div>
<span style="left:849.94px;top:583.00px;font-size:10px;line-height:13px;color:#404040;white-space:pre;transform:rotate(0.03deg) scale(0.9656,1);transform-origin:center 10px;">50</span>
<span style="left:868.74px;top:590.00px;font-size:10px;line-height:13px;color:#404040;white-space:pre;transform:rotate(0.03deg) scale(0.9656,1);transform-origin:center 10px;">40</span>
<span style="left:849.06px;top:640.00px;font-size:10px;line-height:13px;color:#595959;white-space:pre;transform:rotate(0.03deg) scale(1.0118,1);transform-origin:center 10px;">Agosto</span>
<div style="left:896px;top:602px;width:19px;height:30px;background:#f8cbad;"></div>
<div style="left:915px;top:608px;width:19px;height:24px;background:#f0452e;"></div>
<span style="left:899.94px;top:583.00px;font-size:10px;line-height:13px;color:#404040;white-space:pre;transform:rotate(0.03deg) scale(0.9656,1);transform-origin:center 10px;">50</span>
<span style="left:919.24px;top:590.00px;font-size:10px;line-height:13px;color:#404040;white-space:pre;transform:rotate(0.03deg) scale(0.9656,1);transform-origin:center 10px;">40</span>
<span style="left:893.30px;top:640.00px;font-size:10px;line-height:13px;color:#595959;white-space:pre;transform:rotate(0.03deg) scale(0.9918,1);transform-origin:center 10px;">Setembro</span>
<div style="left:947px;top:602px;width:18px;height:30px;background:#f8cbad;"></div>
<div style="left:965px;top:608px;width:19px;height:24px;background:#f0452e;"></div>
<span style="left:950.44px;top:583.00px;font-size:10px;line-height:13px;color:#404040;white-space:pre;transform:rotate(0.03deg) scale(0.9656,1);transform-origin:center 10px;">50</span>
<span style="left:969.24px;top:590.00px;font-size:10px;line-height:13px;color:#404040;white-space:pre;transform:rotate(0.03deg) scale(0.9656,1);transform-origin:center 10px;">40</span>
<span style="left:947.26px;top:640.00px;font-size:10px;line-height:13px;color:#595959;white-space:pre;transform:rotate(0.03deg) scale(1.0517,1);transform-origin:center 10px;">Outubro</span>
<div style="left:997px;top:602px;width:19px;height:30px;background:#f8cbad;"></div>
<div style="left:1016px;top:608px;width:18px;height:24px;background:#f0452e;"></div>
<span style="left:1000.94px;top:583.00px;font-size:10px;line-height:13px;color:#404040;white-space:pre;transform:rotate(0.03deg) scale(0.9656,1);transform-origin:center 10px;">50</span>
<span style="left:1019.74px;top:590.00px;font-size:10px;line-height:13px;color:#404040;white-space:pre;transform:rotate(0.03deg) scale(0.9656,1);transform-origin:center 10px;">40</span>
<span style="left:992.61px;top:640.00px;font-size:10px;line-height:13px;color:#595959;white-space:pre;transform:rotate(0.03deg) scale(1.0081,1);transform-origin:center 10px;">Novembro</span>
<div style="left:1047px;top:602px;width:19px;height:30px;background:#f8cbad;"></div>
<div style="left:1066px;top:608px;width:19px;height:24px;background:#f0452e;"></div>
<span style="left:1050.94px;top:583.00px;font-size:10px;line-height:13px;color:#404040;white-space:pre;transform:rotate(0.03deg) scale(0.9656,1);transform-origin:center 10px;">50</span>
<span style="left:1070.24px;top:590.00px;font-size:10px;line-height:13px;color:#404040;white-space:pre;transform:rotate(0.03deg) scale(0.9656,1);transform-origin:center 10px;">40</span>
<span style="left:1042.96px;top:640.00px;font-size:10px;line-height:13px;color:#595959;white-space:pre;transform:rotate(0.03deg) scale(0.9864,1);transform-origin:center 10px;">Dezembro</span>
<div style="left:710.9px;top:666px;width:6px;height:6px;background:#f8cbad;"></div>
<span style="left:719.20px;top:662.00px;font-size:10px;line-height:13px;color:#595959;white-space:pre;transform:rotate(0.03deg) scale(0.9678,1);transform-origin:left 10px;">Gasto orçado</span>
<div style="left:796.9px;top:666px;width:6px;height:6px;background:#f0452e;"></div>
<span style="left:805.50px;top:662.00px;font-size:10px;line-height:13px;color:#595959;white-space:pre;transform:rotate(0.03deg) scale(0.9637,1);transform-origin:left 10px;">Gasto realizado</span>
<div style="left:1109px;top:343px;width:209px;height:338px;background:#fff;border:1px solid #d9d9d9;box-sizing:border-box;"></div>
<div style="left:1185px;top:351px;width:127px;height:295px;background:#f2f2f2;"></div>
<div style="left:1184px;top:351px;width:1px;height:295px;background:#d9d9d9;"></div>
<div style="left:1185px;top:360px;width:76px;height:28px;background:#dae3f3;"></div>
<div style="left:1185px;top:388px;width:101px;height:27px;background:#6699cc;"></div>
<span style="left:1268.40px;top:368.00px;font-size:10px;line-height:13px;color:#404040;white-space:pre;transform:rotate(0.03deg) scale(0.9710,1);transform-origin:left 10px;">1800</span>
<span style="left:1293.40px;top:395.00px;font-size:10px;line-height:13px;color:#404040;white-space:pre;transform:rotate(0.03deg) scale(0.9710,1);transform-origin:left 10px;">2390</span>
<span style="left:1140.59px;top:381.00px;font-size:10px;line-height:13px;color:#595959;white-space:pre;transform:rotate(0.03deg) scale(0.9438,1);transform-origin:right 10px;">Receita</span>
<div style="left:1185px;top:434px;width:25px;height:27px;background:#dae3f3;"></div>
<div style="left:1185px;top:461px;width:23px;height:28px;background:#6699cc;"></div>
<span style="left:1217.40px;top:441.00px;font-size:10px;line-height:13px;color:#404040;white-space:pre;transform:rotate(0.03deg) scale(0.9710,1);transform-origin:left 10px;">600</span>
<span style="left:1215.40px;top:468.00px;font-size:10px;line-height:13px;color:#404040;white-space:pre;transform:rotate(0.03deg) scale(0.9710,1);transform-origin:left 10px;">550</span>
<span style="left:1147.82px;top:455.00px;font-size:10px;line-height:13px;color:#595959;white-space:pre;transform:rotate(0.03deg) scale(0.9745,1);transform-origin:right 10px;">Gasto</span>
<div style="left:1185px;top:508px;width:12px;height:27px;background:#dae3f3;"></div>
<div style="left:1185px;top:535px;width:14px;height:27px;background:#6699cc;"></div>
<span style="left:1204.40px;top:515.00px;font-size:10px;line-height:13px;color:#404040;white-space:pre;transform:rotate(0.03deg) scale(0.9710,1);transform-origin:left 10px;">300</span>
<span style="left:1206.40px;top:542.00px;font-size:10px;line-height:13px;color:#404040;white-space:pre;transform:rotate(0.03deg) scale(0.9710,1);transform-origin:left 10px;">345</span>
<span style="left:1117.81px;top:528.00px;font-size:10px;line-height:13px;color:#595959;white-space:pre;transform:rotate(0.03deg) scale(1.0142,1);transform-origin:right 10px;">Investimento</span>
<div style="left:1185px;top:581px;width:38px;height:28px;background:#dae3f3;"></div>
<div style="left:1185px;top:609px;width:63px;height:27px;background:#6699cc;"></div>
<span style="left:1230.40px;top:589.00px;font-size:10px;line-height:13px;color:#404040;white-space:pre;transform:rotate(0.03deg) scale(0.9710,1);transform-origin:left 10px;">900</span>
<span style="left:1255.40px;top:616.00px;font-size:10px;line-height:13px;color:#404040;white-space:pre;transform:rotate(0.03deg) scale(0.9710,1);transform-origin:left 10px;">1495</span>
<span style="left:1129.47px;top:602.00px;font-size:10px;line-height:13px;color:#595959;white-space:pre;transform:rotate(0.03deg) scale(0.9660,1);transform-origin:right 10px;">Resultado</span>
<div style="left:1165.3px;top:660px;width:6px;height:6px;background:#dae3f3;"></div>
<span style="left:1173.60px;top:655.00px;font-size:10px;line-height:13px;color:#595959;white-space:pre;transform:rotate(0.03deg) scale(0.9453,1);transform-origin:left 10px;">Orçado</span>
<div style="left:1215.2px;top:660px;width:6px;height:6px;background:#6699cc;"></div>
<span style="left:1223.80px;top:655.00px;font-size:10px;line-height:13px;color:#595959;white-space:pre;transform:rotate(0.03deg) scale(0.9332,1);transform-origin:left 10px;">Realizado</span>
<div style="left:1345px;top:207px;width:21px;height:510px;background:#e6e6e6;"></div>
<div style="left:1348px;top:209px;width:15px;height:508px;background:#d6d6d6;"></div>
<div style="left:1348px;top:209px;width:15px;height:15px;background:#fff;border:1px solid #ababab;box-sizing:border-box;"></div>
<svg style="left:1352px;top:214.5px;" width="7" height="4" viewBox="0 0 7 4"><path d="M0 4L3.5 0L7 4Z" fill="#606060"/></svg>
<div style="left:1348px;top:225px;width:15px;height:407px;background:#fff;border:1px solid #ababab;box-sizing:border-box;"></div>
<div style="left:1348px;top:701px;width:15px;height:15px;background:#fff;border:1px solid #ababab;box-sizing:border-box;"></div>
<svg style="left:1352px;top:707px;" width="7" height="4" viewBox="0 0 7 4"><path d="M0 0L3.5 4L7 0Z" fill="#606060"/></svg>
<div style="left:1344px;top:226px;width:1px;height:491px;background:#999;"></div>
<div style="left:0px;top:717px;width:1366px;height:28px;background:#e6e6e6;"></div>
<div style="left:0px;top:717px;width:1366px;height:1px;background:#ababab;"></div>
<svg style="left:26.5px;top:727px;" width="4.5" height="7.4" viewBox="0 0 4.5 7.4"><path d="M4.5 0V7.4L0 3.7Z" fill="#1a6139"/></svg>
<svg style="left:55.5px;top:727px;" width="4.5" height="7.4" viewBox="0 0 4.5 7.4"><path d="M0 0V7.4L4.5 3.7Z" fill="#1a6139"/></svg>
<div style="left:81px;top:735px;width:2px;height:2px;background:#217346;"></div>
<div style="left:85px;top:735px;width:2px;height:2px;background:#217346;"></div>
<div style="left:89px;top:735px;width:2px;height:2px;background:#217346;"></div>
<span style="left:112.00px;top:723.00px;font-size:12.6px;line-height:16px;color:#444;white-space:pre;transform:scale(0.9331,1);transform-origin:left 12px;">ORÇ_rec</span>
<span style="left:185.00px;top:723.00px;font-size:12.6px;line-height:16px;color:#444;white-space:pre;transform:scale(0.9309,1);transform-origin:left 12px;">ORÇ_gas</span>
<span style="left:262.50px;top:723.00px;font-size:12.6px;line-height:16px;color:#444;white-space:pre;transform:scale(0.9097,1);transform-origin:left 12px;">ORÇ_inv</span>
<span style="left:335.00px;top:723.00px;font-size:12.6px;line-height:16px;color:#444;white-space:pre;transform:scale(0.8925,1);transform-origin:left 12px;">RES_rec</span>
<span style="left:404.00px;top:723.00px;font-size:12.6px;line-height:16px;color:#444;white-space:pre;transform:scale(0.8923,1);transform-origin:left 12px;">RES_gas</span>
<span style="left:477.00px;top:723.00px;font-size:12.6px;line-height:16px;color:#444;white-space:pre;transform:scale(0.8772,1);transform-origin:left 12px;">RES_inv</span>
<span style="left:546.00px;top:723.00px;font-size:12.6px;line-height:16px;color:#444;white-space:pre;transform:scale(0.9180,1);transform-origin:left 12px;">REL_orç</span>
<span style="left:616.00px;top:723.00px;font-size:12.6px;line-height:16px;color:#444;white-space:pre;transform:scale(0.8976,1);transform-origin:left 12px;">REL_res</span>
<span style="left:686.50px;top:723.00px;font-size:12.6px;line-height:16px;color:#444;white-space:pre;transform:scale(0.9075,1);transform-origin:left 12px;">REL_det</span>
<span style="left:756.50px;top:723.00px;font-size:12.6px;line-height:16px;color:#444;white-space:pre;transform:scale(0.8875,1);transform-origin:left 12px;">REL_esp</span>
<div style="left:100px;top:721px;width:1px;height:20px;background:#ababab;"></div>
<div style="left:173px;top:721px;width:1px;height:20px;background:#ababab;"></div>
<div style="left:249px;top:721px;width:1px;height:20px;background:#ababab;"></div>
<div style="left:323px;top:721px;width:1px;height:20px;background:#ababab;"></div>
<div style="left:392px;top:721px;width:1px;height:20px;background:#ababab;"></div>
<div style="left:464px;top:721px;width:1px;height:20px;background:#ababab;"></div>
<div style="left:534px;top:721px;width:1px;height:20px;background:#ababab;"></div>
<div style="left:604px;top:721px;width:1px;height:20px;background:#ababab;"></div>
<div style="left:674px;top:721px;width:1px;height:20px;background:#ababab;"></div>
<div style="left:744px;top:721px;width:1px;height:20px;background:#ababab;"></div>
<div style="left:816.5px;top:717px;width:60.5px;height:25px;background:#fff;"></div>
<div style="left:816px;top:718px;width:1px;height:24px;background:#ababab;"></div>
<div style="left:877px;top:718px;width:1px;height:24px;background:#ababab;"></div>
<div style="left:816.5px;top:740px;width:60.5px;height:2px;background:#217346;"></div>
<span style="left:828.00px;top:722.00px;font-size:12.8px;line-height:17px;color:#217346;white-space:pre;font-weight:bold;transform:scale(0.9650,1);transform-origin:left 13px;">DASH</span>
<span style="left:889.00px;top:724.00px;font-size:11px;line-height:14px;color:#444;white-space:pre;">I</span>
<div style="left:902px;top:735px;width:2px;height:2px;background:#217346;"></div>
<div style="left:906px;top:735px;width:2px;height:2px;background:#217346;"></div>
<div style="left:910px;top:735px;width:2px;height:2px;background:#217346;"></div>
<svg style="left:924.5px;top:722.5px;" width="17" height="17" viewBox="0 0 17 17"><circle cx="8.5" cy="8.5" r="7.6" fill="none" stroke="#767676" stroke-width="1.1"/><path d="M8.5 4.5V12.5 M4.5 8.5H12.5" stroke="#767676" stroke-width="1.3"/></svg>
<div style="left:961px;top:727px;width:2px;height:2px;background:#a6a6a6;"></div>
<div style="left:961px;top:731px;width:2px;height:2px;background:#a6a6a6;"></div>
<div style="left:961px;top:735px;width:2px;height:2px;background:#a6a6a6;"></div>
<div style="left:978px;top:724px;width:367px;height:15px;background:#d4d4d4;"></div>
<div style="left:978px;top:724px;width:15px;height:15px;background:#fff;border:1px solid #ababab;box-sizing:border-box;"></div>
<svg style="left:983px;top:728px;" width="4" height="7" viewBox="0 0 4 7"><path d="M4 0V7L0 3.5Z" fill="#606060"/></svg>
<div style="left:993px;top:724px;width:253px;height:15px;background:#fff;border:1px solid #ababab;box-sizing:border-box;"></div>
<div style="left:1329.5px;top:724px;width:15px;height:15px;background:#fff;border:1px solid #ababab;box-sizing:border-box;"></div>
<svg style="left:1335.5px;top:728px;" width="4" height="7" viewBox="0 0 4 7"><path d="M0 0V7L4 3.5Z" fill="#606060"/></svg>
<div style="left:0px;top:745px;width:1366px;height:21px;background:#f3f2f1;"></div>
<div style="left:0px;top:745px;width:1366px;height:1px;background:#d4d2d0;"></div>
<svg style="left:8px;top:749px;" width="13" height="13" viewBox="0 0 13 13"><path d="M5.5 1.5H12.5V12.5H1.5V5.5" fill="none" stroke="#505050" stroke-width="1"/><rect x="6" y="1.5" width="6.5" height="2.6" fill="#505050"/><path d="M1.5 6.5H12.5 M1.5 8.5H12.5 M1.5 10.5H12.5 M4.5 6.5V12.5 M7.2 4.5V12.5 M9.9 4.5V12.5" fill="none" stroke="#505050" stroke-width="0.8"/><circle cx="2.9" cy="2.9" r="2.8" fill="#6a6a6a"/></svg>
<div style="left:1086.5px;top:745px;width:36.5px;height:21px;background:#d2d0ce;"></div>
<svg style="left:1098px;top:749px;" width="13" height="13" viewBox="0 0 13 13"><path d="M0.5 0.5H12.5V12.5H0.5Z M0.5 4.5H12.5 M0.5 8.5H12.5 M4.5 0.5V12.5 M8.5 0.5V12.5" fill="none" stroke="#6a6a6a" stroke-width="1"/></svg>
<svg style="left:1136px;top:749px;" width="13" height="13" viewBox="0 0 13 13"><path d="M0.5 0.5H12.5V12.5H0.5Z" fill="none" stroke="#6a6a6a" stroke-width="1"/><path d="M3.5 3.5H9.5V9.5H3.5Z M5 5.5H8 M5 7.5H8" fill="none" stroke="#6a6a6a" stroke-width="0.9"/></svg>
<svg style="left:1174px;top:749px;" width="13" height="13" viewBox="0 0 13 13"><path d="M0.5 0.5H12.5V12.5H0.5Z" fill="none" stroke="#6a6a6a" stroke-width="1"/><path d="M4.5 0.5V6.5H12.5 M8.5 0.5V6.5" fill="none" stroke="#6a6a6a" stroke-width="0.9"/></svg>
<div style="left:1204px;top:755px;width:7px;height:2px;background:#5a5a5a;"></div>
<div style="left:1214px;top:756px;width:101px;height:1px;background:#a6a6a6;"></div>
<div style="left:1265px;top:753px;width:1px;height:7px;background:#a6a6a6;"></div>
<div style="left:1258px;top:750px;width:5px;height:12px;background:#666;"></div>
<div style="left:1318px;top:755px;width:8px;height:2px;background:#5a5a5a;"></div>
<div style="left:1321px;top:752px;width:2px;height:8px;background:#5a5a5a;"></div>
<span style="left:1337.00px;top:749.00px;font-size:11px;line-height:14px;color:#444;white-space:pre;transform:scale(0.9538,1);transform-origin:left 11px;">90%</span>
<div style="left:0px;top:766px;width:1366px;height:2px;background:#2b2b2b;"></div>
<div style="left:48px;top:766px;width:344px;height:2px;background:#f0f0f0;"></div>
<div style="left:640px;top:766px;width:48px;height:2px;background:#d98a4a;"></div>
<div style="left:688px;top:766px;width:49px;height:2px;background:#7a7a7a;"></div>
</body></html>
